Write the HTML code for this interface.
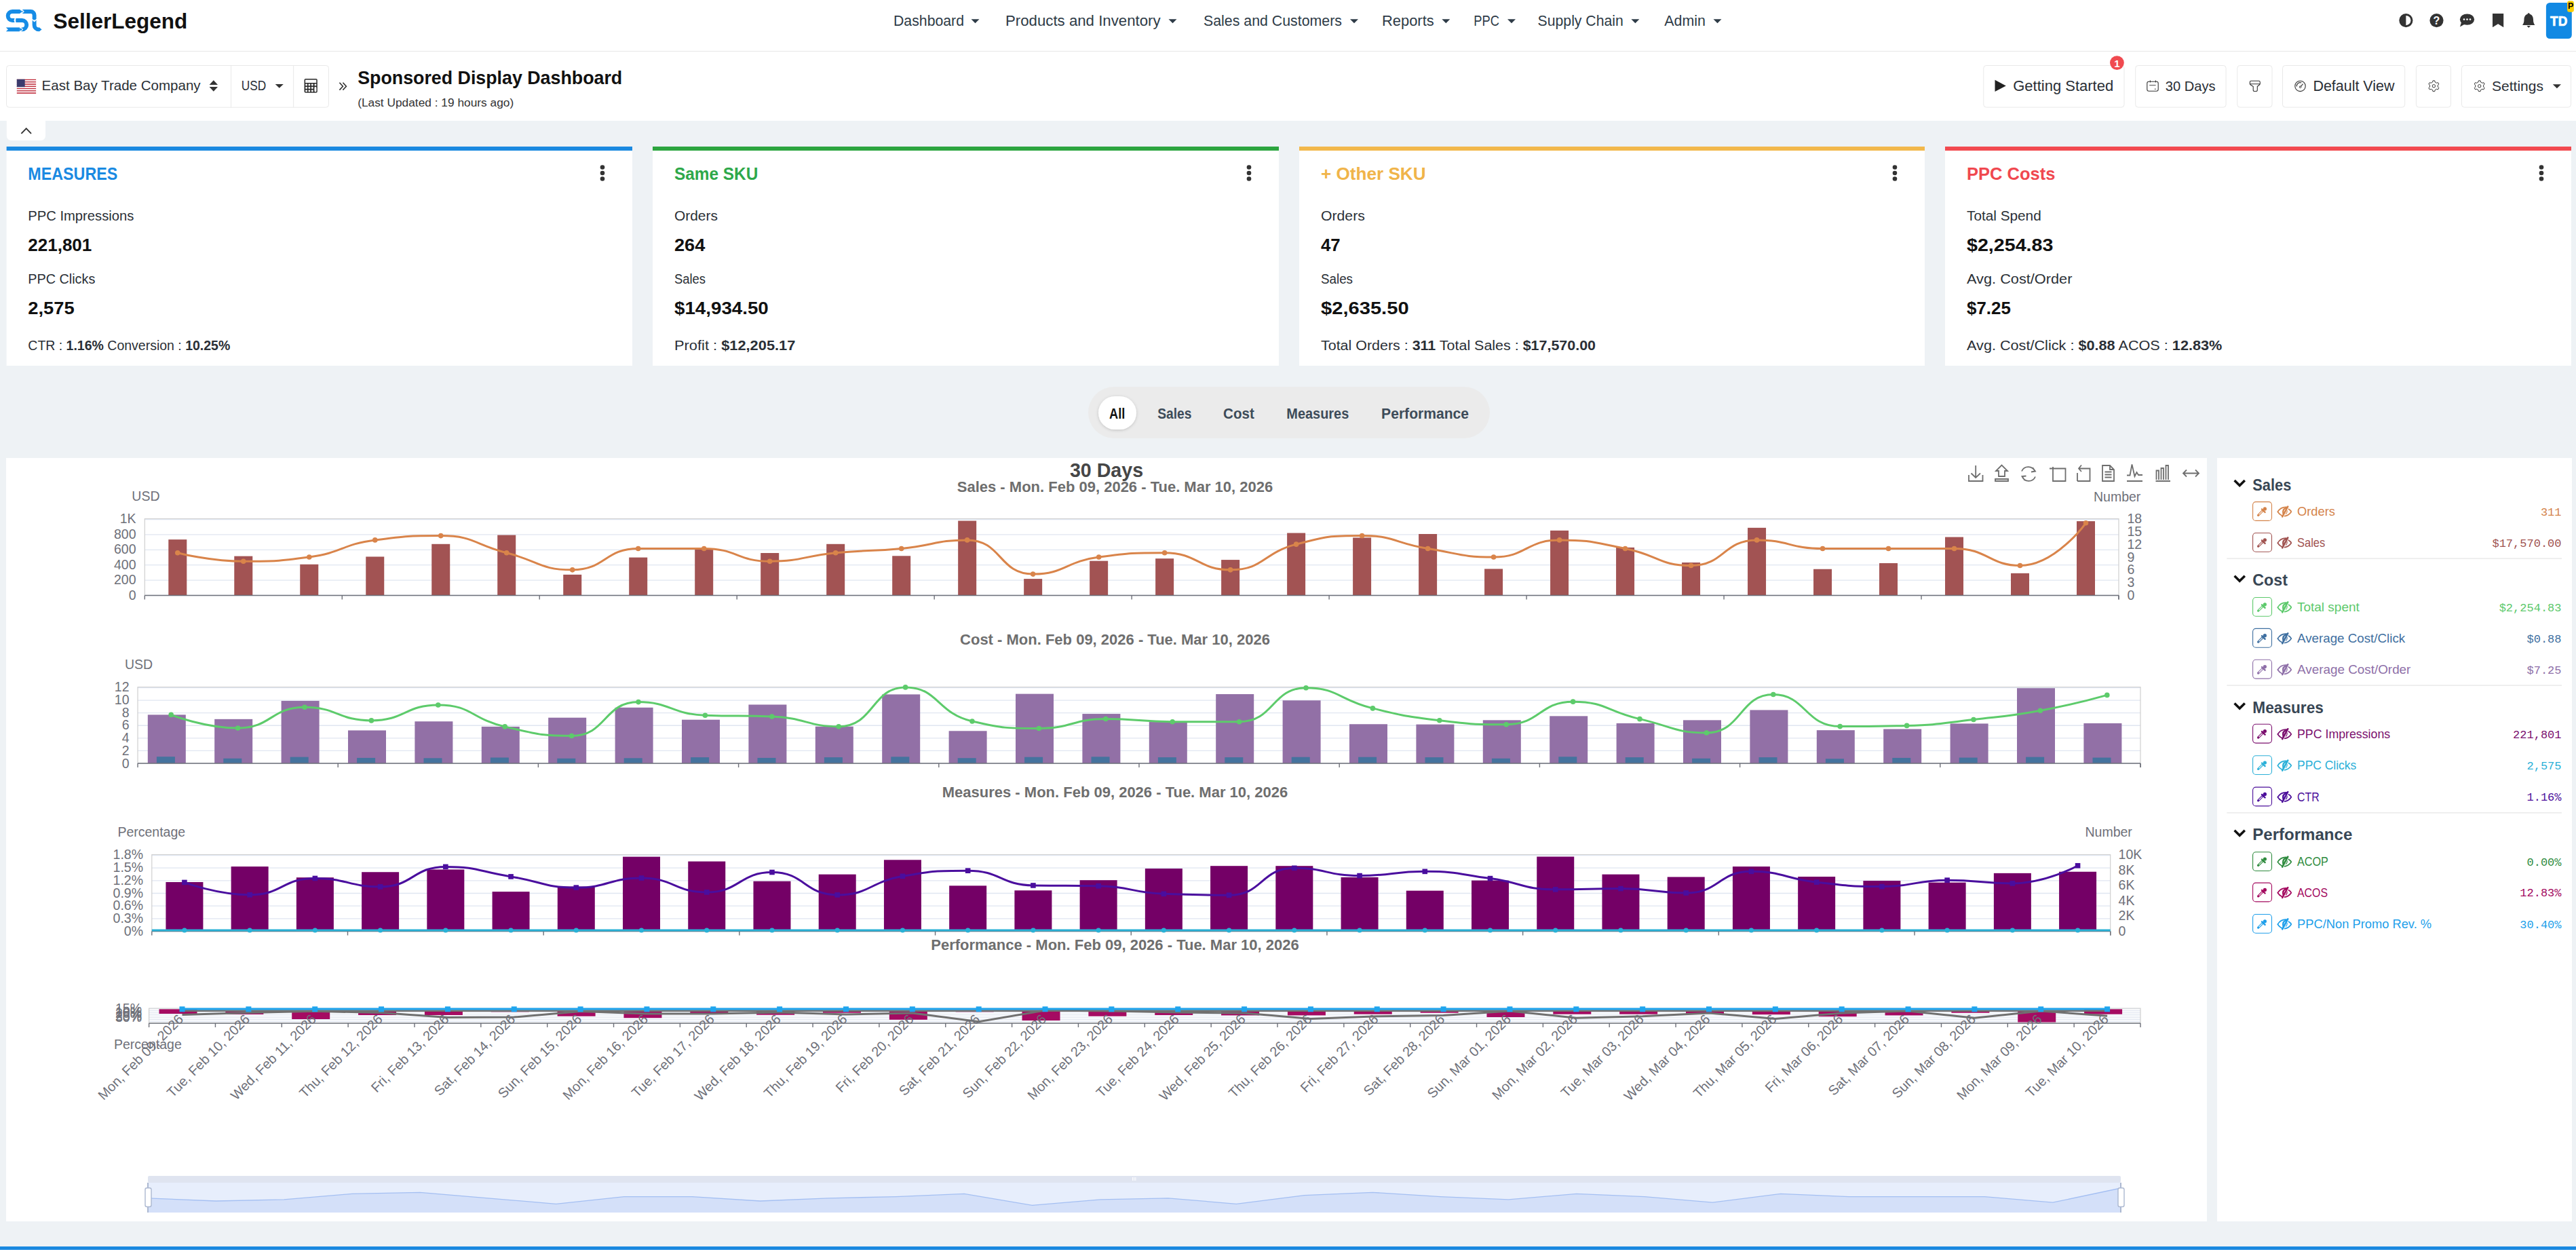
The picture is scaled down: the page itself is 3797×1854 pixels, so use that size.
<!DOCTYPE html>
<html><head><meta charset="utf-8"><title>Sponsored Display Dashboard</title>
<style>html,body{margin:0;padding:0;width:3797px;height:1854px;overflow:hidden;background:#eef2f5;font-family:"Liberation Sans",sans-serif}</style>
</head><body>
<svg width="3797" height="1854" viewBox="0 0 3797 1854" style="display:block"><rect x="0.00" y="0.00" width="3797.00" height="1854.00" fill="#eef2f5" />
<rect x="0.00" y="0.00" width="3797.00" height="76.00" fill="#ffffff" />
<line x1="0.00" y1="75.50" x2="3797.00" y2="75.50" stroke="#e6e6e6" stroke-width="1" />
<rect x="0.00" y="76.00" width="3797.00" height="102.00" fill="#ffffff" />
<g fill="none" stroke="#168ce6" stroke-width="5.9" stroke-linecap="butt">
<path d="M29.2,17 H18.2 A6.5,6.5 0 0 0 18.2,30 H21.2"/>
<path d="M32.8,17 H45.4 A5.2,5.2 0 0 1 50.6,22.2 V28"/>
<path d="M23.2,30 H32.5 A6.7,6.7 0 0 1 32.5,43.4 H30.8"/>
<path d="M9.1,43.4 H28.8"/>
<path d="M50.6,29.8 V37 A6.4,6.4 0 0 0 57,43.4 H58.2"/>
</g>
<g fill="#168ce6">
<path d="M29,14.05 L33,17 L29,19.95 Z"/>
<path d="M28.6,40.45 L31.6,43.4 L28.6,46.35 Z"/>
<path d="M58,40.45 L61.6,43.4 L58,46.35 Z"/>
<path d="M21.4,27.05 L19.4,30 L21.4,32.95 Z"/>
<path d="M47.65,27.8 L53.55,27.8 L50.6,30.8 Z"/>
</g>
<g fill="#fff">
<path d="M8.5,40.3 L11.9,43.4 L8.5,46.5 Z"/>
<path d="M31.1,14 L34.1,17 L31.1,20 L32.9,20 L35.9,17 L32.9,14 Z"/>
<path d="M47.3,29.6 L50.6,32.5 L53.9,29.6 Z"/>
<path d="M29.9,40.3 L32.8,43.4 L29.9,46.5 L31.3,46.5 L34.2,43.4 L31.3,40.3 Z"/>
<path d="M22.3,27 L20.3,30 L22.3,33 L23.6,33 L21.6,30 L23.6,27 Z"/>
</g>
<text x="78.5" y="42.2" font-family="Liberation Sans" font-size="31.5" font-weight="bold" fill="#111" text-anchor="start" >SellerLegend</text>
<text x="1317.0" y="38.2" font-family="Liberation Sans" font-size="21.3" font-weight="normal" fill="#2e3b47" text-anchor="start" textLength="104" lengthAdjust="spacingAndGlyphs">Dashboard</text>
<path d="M1431.5,28.2 h12 l-6.0,6 z" fill="#2e3b47"/>
<text x="1482.0" y="38.2" font-family="Liberation Sans" font-size="21.3" font-weight="normal" fill="#2e3b47" text-anchor="start" textLength="228.6" lengthAdjust="spacingAndGlyphs">Products and Inventory</text>
<path d="M1722.5,28.2 h12 l-6.0,6 z" fill="#2e3b47"/>
<text x="1774.0" y="38.2" font-family="Liberation Sans" font-size="21.3" font-weight="normal" fill="#2e3b47" text-anchor="start" textLength="204" lengthAdjust="spacingAndGlyphs">Sales and Customers</text>
<path d="M1990.0,28.2 h12 l-6.0,6 z" fill="#2e3b47"/>
<text x="2037.0" y="38.2" font-family="Liberation Sans" font-size="21.3" font-weight="normal" fill="#2e3b47" text-anchor="start" textLength="76.7" lengthAdjust="spacingAndGlyphs">Reports</text>
<path d="M2125.3,28.2 h12 l-6.0,6 z" fill="#2e3b47"/>
<text x="2172.3" y="38.2" font-family="Liberation Sans" font-size="21.3" font-weight="normal" fill="#2e3b47" text-anchor="start" textLength="37.7" lengthAdjust="spacingAndGlyphs">PPC</text>
<path d="M2222.0,28.2 h12 l-6.0,6 z" fill="#2e3b47"/>
<text x="2266.6" y="38.2" font-family="Liberation Sans" font-size="21.3" font-weight="normal" fill="#2e3b47" text-anchor="start" textLength="126.2" lengthAdjust="spacingAndGlyphs">Supply Chain</text>
<path d="M2404.4,28.2 h12 l-6.0,6 z" fill="#2e3b47"/>
<text x="2453.3" y="38.2" font-family="Liberation Sans" font-size="21.3" font-weight="normal" fill="#2e3b47" text-anchor="start" textLength="60.6" lengthAdjust="spacingAndGlyphs">Admin</text>
<path d="M2525.5,28.2 h12 l-6.0,6 z" fill="#2e3b47"/>
<circle cx="3546.4" cy="30.1" r="8.6" fill="none" stroke="#333" stroke-width="3"/>
<path d="M3546.4,21.5 A8.6,8.6 0 0 0 3546.4,38.7 Z" fill="#333"/>
<circle cx="3591.5" cy="30.1" r="10.1" fill="#333"/>
<text x="3591.5" y="36.3" font-family="Liberation Sans" font-size="16" font-weight="bold" fill="#fff" text-anchor="middle" >?</text>
<ellipse cx="3636.5" cy="28.6" rx="10.6" ry="8.2" fill="#333"/>
<path d="M3628,33 L3626,39.5 L3634,35 Z" fill="#333"/>
<circle cx="3632.0" cy="28.6" r="1.3" fill="#fff"/>
<circle cx="3636.5" cy="28.6" r="1.3" fill="#fff"/>
<circle cx="3641.0" cy="28.6" r="1.3" fill="#fff"/>
<path d="M3674,20 H3690.2 V40.2 L3682.1,35.2 L3674,40.2 Z" fill="#333"/>
<path d="M3727.2,20.5 C3722,21 3720.5,25 3720.5,29 C3720.5,33 3719.5,35 3718,37 H3736.4 C3735,35 3734,33 3734,29 C3734,25 3732.4,21 3727.2,20.5 Z" fill="#333"/>
<circle cx="3727.2" cy="20.6" r="1.4" fill="#333"/>
<path d="M3724.5,38 H3730 L3727.2,41 Z" fill="#333"/>
<rect x="3752.9" y="4" width="37.9" height="53" rx="5.5" fill="#1289e3"/>
<text x="3759.1" y="37.6" font-family="Liberation Sans" font-size="20" font-weight="bold" fill="#fff" text-anchor="start" textLength="25.2" lengthAdjust="spacingAndGlyphs" stroke="#fff" stroke-width="0.7">TD</text>
<rect x="3784.1" y="1.2" width="9.8" height="16.5" rx="3" fill="#fcd000"/>
<text x="3789.1" y="12.9" font-family="Liberation Sans" font-size="12.5" font-weight="bold" fill="#000" text-anchor="middle" >P</text>
<rect x="9.5" y="96.5" width="475" height="61.7" rx="4" fill="#fff" stroke="#e9e9e9" stroke-width="1"/>
<line x1="340.50" y1="96.50" x2="340.50" y2="158.20" stroke="#e9e9e9" stroke-width="1" />
<line x1="432.60" y1="96.50" x2="432.60" y2="158.20" stroke="#e9e9e9" stroke-width="1" />
<rect x="24.80" y="116.80" width="28.30" height="1.63" fill="#c0303f" />
<rect x="24.80" y="118.43" width="28.30" height="1.63" fill="#ffffff" />
<rect x="24.80" y="120.06" width="28.30" height="1.63" fill="#c0303f" />
<rect x="24.80" y="121.69" width="28.30" height="1.63" fill="#ffffff" />
<rect x="24.80" y="123.32" width="28.30" height="1.63" fill="#c0303f" />
<rect x="24.80" y="124.95" width="28.30" height="1.63" fill="#ffffff" />
<rect x="24.80" y="126.58" width="28.30" height="1.63" fill="#c0303f" />
<rect x="24.80" y="128.22" width="28.30" height="1.63" fill="#ffffff" />
<rect x="24.80" y="129.85" width="28.30" height="1.63" fill="#c0303f" />
<rect x="24.80" y="131.48" width="28.30" height="1.63" fill="#ffffff" />
<rect x="24.80" y="133.11" width="28.30" height="1.63" fill="#c0303f" />
<rect x="24.80" y="134.74" width="28.30" height="1.63" fill="#ffffff" />
<rect x="24.80" y="136.37" width="28.30" height="1.63" fill="#c0303f" />
<rect x="24.80" y="116.80" width="11.89" height="11.42" fill="#3b3b6d" />
<text x="61.6" y="133.4" font-family="Liberation Sans" font-size="20.6" font-weight="normal" fill="#2a2f36" text-anchor="start" textLength="234" lengthAdjust="spacingAndGlyphs">East Bay Trade Company</text>
<path d="M308.6,125 L314.8,118.3 L321,125 Z M308.6,128 L314.8,134.8 L321,128 Z" fill="#333"/>
<text x="355.7" y="133.4" font-family="Liberation Sans" font-size="20" font-weight="normal" fill="#2a2f36" text-anchor="start" textLength="36.5" lengthAdjust="spacingAndGlyphs">USD</text>
<path d="M405.7,124.0 h12.1 l-6.05,5.8 z" fill="#333"/>
<rect x="448.5" y="116.1" width="19.3" height="20.7" rx="2" fill="#333"/>
<rect x="450.1" y="117.6" width="16.1" height="4.4" fill="#fff"/>
<circle cx="451.6" cy="125" r="1.45" fill="#fff"/>
<circle cx="451.6" cy="129.5" r="1.45" fill="#fff"/>
<circle cx="451.6" cy="134" r="1.45" fill="#fff"/>
<circle cx="455.9" cy="125" r="1.45" fill="#fff"/>
<circle cx="455.9" cy="129.5" r="1.45" fill="#fff"/>
<circle cx="455.9" cy="134" r="1.45" fill="#fff"/>
<circle cx="460.3" cy="125" r="1.45" fill="#fff"/>
<circle cx="460.3" cy="129.5" r="1.45" fill="#fff"/>
<circle cx="460.3" cy="134" r="1.45" fill="#fff"/>
<circle cx="464.9" cy="125" r="1.45" fill="#fff"/>
<rect x="463.45" y="128" width="2.9" height="7.5" rx="1.45" fill="#fff"/>
<path d="M500.4,121.8 L505.4,127.2 L500.4,132.6 M505.4,121.8 L510.4,127.2 L505.4,132.6" fill="none" stroke="#333" stroke-width="1.6"/>
<text x="527.2" y="124.2" font-family="Liberation Sans" font-size="26.8" font-weight="bold" fill="#111" text-anchor="start" textLength="390" lengthAdjust="spacingAndGlyphs">Sponsored Display Dashboard</text>
<text x="527.2" y="156.8" font-family="Liberation Sans" font-size="17.3" font-weight="normal" fill="#333" text-anchor="start" textLength="230" lengthAdjust="spacingAndGlyphs">(Last Updated : 19 hours ago)</text>
<rect x="2923.8" y="96.5" width="207.2" height="61.6" rx="4" fill="#fff" stroke="#e9e9e9" stroke-width="1"/>
<path d="M2940.5,117.7 L2956.8,126.4 L2940.5,135 Z" fill="#222"/>
<text x="2967.2" y="134.4" font-family="Liberation Sans" font-size="22" font-weight="normal" fill="#2a2f36" text-anchor="start" textLength="148" lengthAdjust="spacingAndGlyphs">Getting Started</text>
<circle cx="3120.4" cy="92.6" r="10.4" fill="#f04a50"/>
<text x="3120.4" y="98.8" font-family="Liberation Sans" font-size="15" font-weight="bold" fill="#fff" text-anchor="middle" >1</text>
<rect x="3147.7" y="96.5" width="133.4" height="61.6" rx="4" fill="#fff" stroke="#e9e9e9" stroke-width="1"/>
<rect x="3164.8" y="120.3" width="16.4" height="14" rx="2.5" fill="none" stroke="#333" stroke-width="1.1"/>
<line x1="3169.40" y1="118.60" x2="3169.40" y2="121.50" stroke="#333" stroke-width="1.1" />
<line x1="3177.40" y1="118.60" x2="3177.40" y2="121.50" stroke="#333" stroke-width="1.1" />
<line x1="3168.20" y1="125.60" x2="3177.60" y2="125.60" stroke="#777" stroke-width="1.4" />
<rect x="3176.00" y="130.60" width="1.40" height="1.30" fill="#333" />
<text x="3191.8" y="134.4" font-family="Liberation Sans" font-size="21" font-weight="normal" fill="#2a2f36" text-anchor="start" textLength="73.8" lengthAdjust="spacingAndGlyphs">30 Days</text>
<rect x="3297.8" y="96.5" width="51.2" height="61.6" rx="4" fill="#fff" stroke="#e9e9e9" stroke-width="1"/>
<path d="M3316.3,121.2 Q3316.3,119.3 3318.2,119.3 H3329.4 Q3331.3,119.3 3331.3,121.2 V123.2 Q3331.3,124.2 3330.3,125 L3327.3,127.5 V132.4 Q3327.3,134.5 3325.2,134.5 H3323.3 Q3321.2,134.5 3321.2,132.4 V127.5 L3317.3,125 Q3316.3,124.2 3316.3,123.2 Z M3316.3,123.8 H3331.3" fill="none" stroke="#333" stroke-width="1.1" stroke-linejoin="round"/>
<rect x="3364.5" y="96.5" width="180.2" height="61.6" rx="4" fill="#fff" stroke="#e9e9e9" stroke-width="1"/>
<circle cx="3390.5" cy="126.9" r="7.7" fill="none" stroke="#333" stroke-width="1.1"/>
<path d="M3385.3,127.5 A5.3,5.3 0 0 1 3392.3,121.9" fill="none" stroke="#333" stroke-width="1.1"/>
<path d="M3391.2,127.6 L3394.6,123.6" stroke="#333" stroke-width="1.1"/>
<circle cx="3390.6" cy="128.2" r="1.3" fill="none" stroke="#333" stroke-width="1"/>
<text x="3409.4" y="134.4" font-family="Liberation Sans" font-size="21.5" font-weight="normal" fill="#2a2f36" text-anchor="start" textLength="120.1" lengthAdjust="spacingAndGlyphs">Default View</text>
<rect x="3561.4" y="96.5" width="51.1" height="61.6" rx="4" fill="#fff" stroke="#e9e9e9" stroke-width="1"/>
<polygon points="3585.60,120.99 3586.05,118.92 3588.75,118.92 3589.20,120.99 3591.53,122.34 3593.55,121.69 3594.91,124.03 3593.33,125.45 3593.33,128.15 3594.91,129.57 3593.55,131.91 3591.53,131.26 3589.20,132.61 3588.75,134.68 3586.05,134.68 3585.60,132.61 3583.27,131.26 3581.25,131.91 3579.89,129.57 3581.47,128.15 3581.47,125.45 3579.89,124.03 3581.25,121.69 3583.27,122.34" fill="none" stroke="#333" stroke-width="1.0" stroke-linejoin="round"/>
<circle cx="3587.4" cy="126.8" r="2.2" fill="none" stroke="#333" stroke-width="1.0"/>
<rect x="3628.5" y="96.5" width="161.0" height="61.6" rx="4" fill="#fff" stroke="#e9e9e9" stroke-width="1"/>
<polygon points="3652.90,120.99 3653.35,118.92 3656.05,118.92 3656.50,120.99 3658.83,122.34 3660.85,121.69 3662.21,124.03 3660.63,125.45 3660.63,128.15 3662.21,129.57 3660.85,131.91 3658.83,131.26 3656.50,132.61 3656.05,134.68 3653.35,134.68 3652.90,132.61 3650.57,131.26 3648.55,131.91 3647.19,129.57 3648.77,128.15 3648.77,125.45 3647.19,124.03 3648.55,121.69 3650.57,122.34" fill="none" stroke="#333" stroke-width="1.0" stroke-linejoin="round"/>
<circle cx="3654.7" cy="126.8" r="2.2" fill="none" stroke="#333" stroke-width="1.0"/>
<text x="3673.0" y="134.4" font-family="Liberation Sans" font-size="21" font-weight="normal" fill="#2a2f36" text-anchor="start" textLength="76" lengthAdjust="spacingAndGlyphs">Settings</text>
<path d="M3762.8,124.2 h12.2 l-6.1,6 z" fill="#333"/>
<path d="M9.8,177 H67 V200.5 A6.5,6.5 0 0 1 60.5,207 H16.3 A6.5,6.5 0 0 1 9.8,200.5 Z" fill="#fff"/>
<path d="M31.4,196.8 L38.7,189.4 L46,196.8" fill="none" stroke="#333" stroke-width="1.9"/>
<rect x="9.60" y="216.00" width="922.40" height="323.00" fill="#fff" />
<rect x="9.60" y="216.00" width="922.40" height="6.00" fill="#1a89e0" />
<text x="41.3" y="265.0" font-family="Liberation Sans" font-size="26" font-weight="bold" fill="#1a8ae2" text-anchor="start" textLength="132" lengthAdjust="spacingAndGlyphs">MEASURES</text>
<circle cx="888" cy="246.5" r="3.3" fill="#333"/>
<circle cx="888" cy="255" r="3.3" fill="#333"/>
<circle cx="888" cy="263.5" r="3.3" fill="#333"/>
<text x="41.3" y="325.0" font-family="Liberation Sans" font-size="20.5" font-weight="normal" fill="#2a2f36" text-anchor="start" textLength="156" lengthAdjust="spacingAndGlyphs">PPC Impressions</text>
<text x="41.3" y="369.5" font-family="Liberation Sans" font-size="26" font-weight="bold" fill="#111" text-anchor="start" textLength="94" lengthAdjust="spacingAndGlyphs">221,801</text>
<text x="41.3" y="418.0" font-family="Liberation Sans" font-size="20.5" font-weight="normal" fill="#2a2f36" text-anchor="start" textLength="99" lengthAdjust="spacingAndGlyphs">PPC Clicks</text>
<text x="41.3" y="463.0" font-family="Liberation Sans" font-size="26" font-weight="bold" fill="#111" text-anchor="start" textLength="68.4" lengthAdjust="spacingAndGlyphs">2,575</text>
<text x="41.3" y="515.5" font-family="Liberation Sans" font-size="20.5" fill="#2a2f36" xml:space="preserve" textLength="298" lengthAdjust="spacingAndGlyphs"><tspan font-weight="normal">CTR : </tspan><tspan font-weight="bold">1.16%</tspan><tspan font-weight="normal"> Conversion : </tspan><tspan font-weight="bold">10.25%</tspan></text>
<rect x="962.00" y="216.00" width="923.00" height="323.00" fill="#fff" />
<rect x="962.00" y="216.00" width="923.00" height="6.00" fill="#2ca53f" />
<text x="994.0" y="265.0" font-family="Liberation Sans" font-size="26" font-weight="bold" fill="#2ea84a" text-anchor="start" textLength="123.3" lengthAdjust="spacingAndGlyphs">Same SKU</text>
<circle cx="1841" cy="246.5" r="3.3" fill="#333"/>
<circle cx="1841" cy="255" r="3.3" fill="#333"/>
<circle cx="1841" cy="263.5" r="3.3" fill="#333"/>
<text x="994.0" y="325.0" font-family="Liberation Sans" font-size="20.5" font-weight="normal" fill="#2a2f36" text-anchor="start" textLength="63.9" lengthAdjust="spacingAndGlyphs">Orders</text>
<text x="994.0" y="369.5" font-family="Liberation Sans" font-size="26" font-weight="bold" fill="#111" text-anchor="start" textLength="45.3" lengthAdjust="spacingAndGlyphs">264</text>
<text x="994.0" y="418.0" font-family="Liberation Sans" font-size="20.5" font-weight="normal" fill="#2a2f36" text-anchor="start" textLength="46" lengthAdjust="spacingAndGlyphs">Sales</text>
<text x="994.0" y="463.0" font-family="Liberation Sans" font-size="26" font-weight="bold" fill="#111" text-anchor="start" textLength="138.8" lengthAdjust="spacingAndGlyphs">$14,934.50</text>
<text x="994" y="515.5" font-family="Liberation Sans" font-size="20.5" fill="#2a2f36" xml:space="preserve" textLength="178.4" lengthAdjust="spacingAndGlyphs"><tspan font-weight="normal">Profit : </tspan><tspan font-weight="bold">$12,205.17</tspan></text>
<rect x="1915.00" y="216.00" width="922.00" height="323.00" fill="#fff" />
<rect x="1915.00" y="216.00" width="922.00" height="6.00" fill="#f2b84b" />
<text x="1947.0" y="265.0" font-family="Liberation Sans" font-size="26" font-weight="bold" fill="#f0b44a" text-anchor="start" textLength="154.6" lengthAdjust="spacingAndGlyphs">+ Other SKU</text>
<circle cx="2793" cy="246.5" r="3.3" fill="#333"/>
<circle cx="2793" cy="255" r="3.3" fill="#333"/>
<circle cx="2793" cy="263.5" r="3.3" fill="#333"/>
<text x="1947.0" y="325.0" font-family="Liberation Sans" font-size="20.5" font-weight="normal" fill="#2a2f36" text-anchor="start" textLength="64.8" lengthAdjust="spacingAndGlyphs">Orders</text>
<text x="1947.0" y="369.5" font-family="Liberation Sans" font-size="26" font-weight="bold" fill="#111" text-anchor="start" textLength="28.7" lengthAdjust="spacingAndGlyphs">47</text>
<text x="1947.0" y="418.0" font-family="Liberation Sans" font-size="20.5" font-weight="normal" fill="#2a2f36" text-anchor="start" textLength="47" lengthAdjust="spacingAndGlyphs">Sales</text>
<text x="1947.0" y="463.0" font-family="Liberation Sans" font-size="26" font-weight="bold" fill="#111" text-anchor="start" textLength="129.6" lengthAdjust="spacingAndGlyphs">$2,635.50</text>
<text x="1947" y="515.5" font-family="Liberation Sans" font-size="20.5" fill="#2a2f36" xml:space="preserve" textLength="405" lengthAdjust="spacingAndGlyphs"><tspan font-weight="normal">Total Orders : </tspan><tspan font-weight="bold">311</tspan><tspan font-weight="normal"> Total Sales : </tspan><tspan font-weight="bold">$17,570.00</tspan></text>
<rect x="2867.00" y="216.00" width="923.00" height="323.00" fill="#fff" />
<rect x="2867.00" y="216.00" width="923.00" height="6.00" fill="#f24a50" />
<text x="2899.0" y="265.0" font-family="Liberation Sans" font-size="26" font-weight="bold" fill="#f0484f" text-anchor="start" textLength="130.4" lengthAdjust="spacingAndGlyphs">PPC Costs</text>
<circle cx="3746" cy="246.5" r="3.3" fill="#333"/>
<circle cx="3746" cy="255" r="3.3" fill="#333"/>
<circle cx="3746" cy="263.5" r="3.3" fill="#333"/>
<text x="2899.0" y="325.0" font-family="Liberation Sans" font-size="20.5" font-weight="normal" fill="#2a2f36" text-anchor="start" textLength="109.7" lengthAdjust="spacingAndGlyphs">Total Spend</text>
<text x="2899.0" y="369.5" font-family="Liberation Sans" font-size="26" font-weight="bold" fill="#111" text-anchor="start" textLength="127.4" lengthAdjust="spacingAndGlyphs">$2,254.83</text>
<text x="2899.0" y="418.0" font-family="Liberation Sans" font-size="20.5" font-weight="normal" fill="#2a2f36" text-anchor="start" textLength="155.4" lengthAdjust="spacingAndGlyphs">Avg. Cost/Order</text>
<text x="2899.0" y="463.0" font-family="Liberation Sans" font-size="26" font-weight="bold" fill="#111" text-anchor="start" textLength="64.8" lengthAdjust="spacingAndGlyphs">$7.25</text>
<text x="2899" y="515.5" font-family="Liberation Sans" font-size="20.5" fill="#2a2f36" xml:space="preserve" textLength="376.3" lengthAdjust="spacingAndGlyphs"><tspan font-weight="normal">Avg. Cost/Click : </tspan><tspan font-weight="bold">$0.88</tspan><tspan font-weight="normal"> ACOS : </tspan><tspan font-weight="bold">12.83%</tspan></text>
<rect x="1604" y="570" width="592" height="76" rx="38" fill="#ebebeb"/>
<defs><filter id="sh" x="-30%" y="-30%" width="160%" height="160%"><feDropShadow dx="0" dy="1" stdDeviation="2" flood-color="#000" flood-opacity="0.18"/></filter></defs>
<rect x="1619" y="584" width="56" height="49" rx="24.5" fill="#fff" filter="url(#sh)"/>
<text x="1635.0" y="616.6" font-family="Liberation Sans" font-size="22.5" font-weight="bold" fill="#111" text-anchor="start" textLength="23.3" lengthAdjust="spacingAndGlyphs">All</text>
<text x="1706.2" y="616.6" font-family="Liberation Sans" font-size="22.5" font-weight="bold" fill="#3d4b59" text-anchor="start" textLength="50.2" lengthAdjust="spacingAndGlyphs">Sales</text>
<text x="1803.1" y="616.6" font-family="Liberation Sans" font-size="22.5" font-weight="bold" fill="#3d4b59" text-anchor="start" textLength="45.7" lengthAdjust="spacingAndGlyphs">Cost</text>
<text x="1896.3" y="616.6" font-family="Liberation Sans" font-size="22.5" font-weight="bold" fill="#3d4b59" text-anchor="start" textLength="92" lengthAdjust="spacingAndGlyphs">Measures</text>
<text x="2036.1" y="616.6" font-family="Liberation Sans" font-size="22.5" font-weight="bold" fill="#3d4b59" text-anchor="start" textLength="129" lengthAdjust="spacingAndGlyphs">Performance</text>
<rect x="9.00" y="675.00" width="3244.00" height="1125.00" fill="#fff" />
<rect x="3268.00" y="675.00" width="523.00" height="1125.00" fill="#fff" />
<rect x="0.00" y="1837.00" width="3797.00" height="5.00" fill="#1a89e0" />
<rect x="0.00" y="1842.00" width="3797.00" height="12.00" fill="#fff" />
<text x="1631.0" y="702.9" font-family="Liberation Sans" font-size="28.6" font-weight="bold" fill="#464646" text-anchor="middle" >30 Days</text>
<text x="1643.5" y="724.9" font-family="Liberation Sans" font-size="22" font-weight="bold" fill="#6e6e6e" text-anchor="middle" >Sales - Mon. Feb 09, 2026 - Tue. Mar 10, 2026</text>
<text x="194.3" y="738.0" font-family="Liberation Sans" font-size="19.5" font-weight="normal" fill="#6e7079" text-anchor="start" >USD</text>
<text x="3086.0" y="738.5" font-family="Liberation Sans" font-size="19.5" font-weight="normal" fill="#6e7079" text-anchor="start" >Number</text>
<line x1="213.30" y1="765.50" x2="3123.00" y2="765.50" stroke="#e0e6f1" stroke-width="1.3" />
<line x1="213.30" y1="787.90" x2="3123.00" y2="787.90" stroke="#e0e6f1" stroke-width="1.3" />
<line x1="213.30" y1="810.30" x2="3123.00" y2="810.30" stroke="#e0e6f1" stroke-width="1.3" />
<line x1="213.30" y1="832.70" x2="3123.00" y2="832.70" stroke="#e0e6f1" stroke-width="1.3" />
<line x1="213.30" y1="855.10" x2="3123.00" y2="855.10" stroke="#e0e6f1" stroke-width="1.3" />
<line x1="213.30" y1="877.50" x2="3123.00" y2="877.50" stroke="#e0e6f1" stroke-width="1.3" />
<path d="M213.30,877.50 V764.50 H3123.00 V877.50" fill="none" stroke="#cfcfcf" stroke-width="1.2"/>
<text x="200.5" y="771.0" font-family="Liberation Sans" font-size="19.5" font-weight="normal" fill="#6e7079" text-anchor="end" >1K</text>
<text x="200.5" y="793.6" font-family="Liberation Sans" font-size="19.5" font-weight="normal" fill="#6e7079" text-anchor="end" >800</text>
<text x="200.5" y="816.2" font-family="Liberation Sans" font-size="19.5" font-weight="normal" fill="#6e7079" text-anchor="end" >600</text>
<text x="200.5" y="838.8" font-family="Liberation Sans" font-size="19.5" font-weight="normal" fill="#6e7079" text-anchor="end" >400</text>
<text x="200.5" y="861.4" font-family="Liberation Sans" font-size="19.5" font-weight="normal" fill="#6e7079" text-anchor="end" >200</text>
<text x="200.5" y="884.0" font-family="Liberation Sans" font-size="19.5" font-weight="normal" fill="#6e7079" text-anchor="end" >0</text>
<text x="3135.4" y="771.0" font-family="Liberation Sans" font-size="19.5" font-weight="normal" fill="#6e7079" text-anchor="start" >18</text>
<text x="3135.4" y="789.8" font-family="Liberation Sans" font-size="19.5" font-weight="normal" fill="#6e7079" text-anchor="start" >15</text>
<text x="3135.4" y="808.7" font-family="Liberation Sans" font-size="19.5" font-weight="normal" fill="#6e7079" text-anchor="start" >12</text>
<text x="3135.4" y="827.5" font-family="Liberation Sans" font-size="19.5" font-weight="normal" fill="#6e7079" text-anchor="start" >9</text>
<text x="3135.4" y="846.3" font-family="Liberation Sans" font-size="19.5" font-weight="normal" fill="#6e7079" text-anchor="start" >6</text>
<text x="3135.4" y="865.2" font-family="Liberation Sans" font-size="19.5" font-weight="normal" fill="#6e7079" text-anchor="start" >3</text>
<text x="3135.4" y="884.0" font-family="Liberation Sans" font-size="19.5" font-weight="normal" fill="#6e7079" text-anchor="start" >0</text>
<rect x="248.30" y="795.12" width="27.00" height="82.38" fill="#a25353" />
<rect x="345.28" y="819.64" width="27.00" height="57.86" fill="#a25353" />
<rect x="442.27" y="831.74" width="27.00" height="45.77" fill="#a25353" />
<rect x="539.26" y="820.43" width="27.00" height="57.06" fill="#a25353" />
<rect x="636.25" y="801.79" width="27.00" height="75.71" fill="#a25353" />
<rect x="733.24" y="788.57" width="27.00" height="88.93" fill="#a25353" />
<rect x="830.23" y="846.88" width="27.00" height="30.62" fill="#a25353" />
<rect x="927.22" y="821.57" width="27.00" height="55.94" fill="#a25353" />
<rect x="1024.21" y="809.93" width="27.00" height="67.57" fill="#a25353" />
<rect x="1121.20" y="815.01" width="27.00" height="62.49" fill="#a25353" />
<rect x="1218.19" y="801.79" width="27.00" height="75.71" fill="#a25353" />
<rect x="1315.18" y="819.30" width="27.00" height="58.20" fill="#a25353" />
<rect x="1412.17" y="767.55" width="27.00" height="109.95" fill="#a25353" />
<rect x="1509.16" y="853.09" width="27.00" height="24.41" fill="#a25353" />
<rect x="1606.15" y="826.65" width="27.00" height="50.85" fill="#a25353" />
<rect x="1703.14" y="823.15" width="27.00" height="54.35" fill="#a25353" />
<rect x="1800.13" y="825.07" width="27.00" height="52.43" fill="#a25353" />
<rect x="1897.12" y="785.52" width="27.00" height="91.98" fill="#a25353" />
<rect x="1994.11" y="792.41" width="27.00" height="85.09" fill="#a25353" />
<rect x="2091.11" y="786.99" width="27.00" height="90.51" fill="#a25353" />
<rect x="2188.09" y="838.40" width="27.00" height="39.10" fill="#a25353" />
<rect x="2285.09" y="781.90" width="27.00" height="95.60" fill="#a25353" />
<rect x="2382.08" y="806.88" width="27.00" height="70.62" fill="#a25353" />
<rect x="2479.07" y="829.02" width="27.00" height="48.48" fill="#a25353" />
<rect x="2576.05" y="777.83" width="27.00" height="99.67" fill="#a25353" />
<rect x="2673.05" y="838.74" width="27.00" height="38.76" fill="#a25353" />
<rect x="2770.03" y="829.93" width="27.00" height="47.57" fill="#a25353" />
<rect x="2867.03" y="791.51" width="27.00" height="85.99" fill="#a25353" />
<rect x="2964.01" y="844.84" width="27.00" height="32.66" fill="#a25353" />
<rect x="3061.01" y="768.12" width="27.00" height="109.38" fill="#a25353" />
<line x1="213.30" y1="877.50" x2="3123.00" y2="877.50" stroke="#6e7079" stroke-width="1.6" />
<line x1="213.30" y1="877.50" x2="213.30" y2="883.50" stroke="#6e7079" stroke-width="1.4" />
<line x1="504.27" y1="877.50" x2="504.27" y2="883.50" stroke="#6e7079" stroke-width="1.4" />
<line x1="795.24" y1="877.50" x2="795.24" y2="883.50" stroke="#6e7079" stroke-width="1.4" />
<line x1="1086.21" y1="877.50" x2="1086.21" y2="883.50" stroke="#6e7079" stroke-width="1.4" />
<line x1="1377.18" y1="877.50" x2="1377.18" y2="883.50" stroke="#6e7079" stroke-width="1.4" />
<line x1="1668.15" y1="877.50" x2="1668.15" y2="883.50" stroke="#6e7079" stroke-width="1.4" />
<line x1="1959.12" y1="877.50" x2="1959.12" y2="883.50" stroke="#6e7079" stroke-width="1.4" />
<line x1="2250.09" y1="877.50" x2="2250.09" y2="883.50" stroke="#6e7079" stroke-width="1.4" />
<line x1="2541.06" y1="877.50" x2="2541.06" y2="883.50" stroke="#6e7079" stroke-width="1.4" />
<line x1="2832.03" y1="877.50" x2="2832.03" y2="883.50" stroke="#6e7079" stroke-width="1.4" />
<line x1="3123.00" y1="877.50" x2="3123.00" y2="883.50" stroke="#6e7079" stroke-width="1.4" />
<line x1="3123.00" y1="877.50" x2="3123.00" y2="883.50" stroke="#6e7079" stroke-width="1.4" />
<path d="M261.80,814.72 C261.80,814.72 310.14,827.28 358.78,827.28 C407.13,827.28 408.02,827.28 455.77,821.00 C505.01,814.53 503.53,802.36 552.76,795.89 C600.52,789.61 602.00,789.61 649.75,789.61 C698.99,789.61 698.25,802.17 746.74,814.72 C795.24,827.28 795.66,839.83 843.73,839.83 C892.65,839.83 891.02,808.44 940.72,808.44 C988.01,808.44 989.67,808.44 1037.71,808.44 C1086.66,808.44 1085.96,827.28 1134.70,827.28 C1182.95,827.28 1183.05,819.45 1231.69,814.72 C1280.04,810.03 1280.34,813.14 1328.68,808.44 C1377.33,803.72 1379.86,795.89 1425.67,795.89 C1476.85,795.89 1472.08,846.11 1522.66,846.11 C1569.07,846.11 1570.42,827.47 1619.65,821.00 C1667.41,814.72 1668.89,814.72 1716.64,814.72 C1765.88,814.72 1766.06,839.83 1813.63,839.83 C1863.05,839.83 1860.63,815.11 1910.62,802.17 C1957.62,790.00 1959.37,789.61 2007.61,789.61 C2056.36,789.61 2055.86,800.56 2104.61,808.44 C2152.85,816.25 2153.69,821.00 2201.59,821.00 C2250.68,821.00 2249.50,795.89 2298.59,795.89 C2346.49,795.89 2347.67,799.14 2395.58,808.44 C2444.66,817.97 2444.99,833.56 2492.57,833.56 C2541.98,833.56 2539.56,795.89 2589.55,795.89 C2636.55,795.89 2637.85,808.44 2686.55,808.44 C2734.84,808.44 2735.04,808.44 2783.53,808.44 C2832.03,808.44 2832.82,808.44 2880.53,808.44 C2929.81,808.44 2932.47,833.56 2977.51,833.56 C3029.46,833.56 3074.51,770.78 3074.51,770.78" fill="none" stroke="#d9844a" stroke-width="3"/>
<circle cx="261.80" cy="814.72" r="3.8" fill="#d9844a"/>
<circle cx="358.78" cy="827.28" r="3.8" fill="#d9844a"/>
<circle cx="455.77" cy="821.00" r="3.8" fill="#d9844a"/>
<circle cx="552.76" cy="795.89" r="3.8" fill="#d9844a"/>
<circle cx="649.75" cy="789.61" r="3.8" fill="#d9844a"/>
<circle cx="746.74" cy="814.72" r="3.8" fill="#d9844a"/>
<circle cx="843.73" cy="839.83" r="3.8" fill="#d9844a"/>
<circle cx="940.72" cy="808.44" r="3.8" fill="#d9844a"/>
<circle cx="1037.71" cy="808.44" r="3.8" fill="#d9844a"/>
<circle cx="1134.70" cy="827.28" r="3.8" fill="#d9844a"/>
<circle cx="1231.69" cy="814.72" r="3.8" fill="#d9844a"/>
<circle cx="1328.68" cy="808.44" r="3.8" fill="#d9844a"/>
<circle cx="1425.67" cy="795.89" r="3.8" fill="#d9844a"/>
<circle cx="1522.66" cy="846.11" r="3.8" fill="#d9844a"/>
<circle cx="1619.65" cy="821.00" r="3.8" fill="#d9844a"/>
<circle cx="1716.64" cy="814.72" r="3.8" fill="#d9844a"/>
<circle cx="1813.63" cy="839.83" r="3.8" fill="#d9844a"/>
<circle cx="1910.62" cy="802.17" r="3.8" fill="#d9844a"/>
<circle cx="2007.61" cy="789.61" r="3.8" fill="#d9844a"/>
<circle cx="2104.61" cy="808.44" r="3.8" fill="#d9844a"/>
<circle cx="2201.59" cy="821.00" r="3.8" fill="#d9844a"/>
<circle cx="2298.59" cy="795.89" r="3.8" fill="#d9844a"/>
<circle cx="2395.58" cy="808.44" r="3.8" fill="#d9844a"/>
<circle cx="2492.57" cy="833.56" r="3.8" fill="#d9844a"/>
<circle cx="2589.55" cy="795.89" r="3.8" fill="#d9844a"/>
<circle cx="2686.55" cy="808.44" r="3.8" fill="#d9844a"/>
<circle cx="2783.53" cy="808.44" r="3.8" fill="#d9844a"/>
<circle cx="2880.53" cy="808.44" r="3.8" fill="#d9844a"/>
<circle cx="2977.51" cy="833.56" r="3.8" fill="#d9844a"/>
<circle cx="3074.51" cy="770.78" r="3.8" fill="#d9844a"/>
<text x="1643.5" y="950.3" font-family="Liberation Sans" font-size="22" font-weight="bold" fill="#6e6e6e" text-anchor="middle" >Cost - Mon. Feb 09, 2026 - Tue. Mar 10, 2026</text>
<text x="184.0" y="986.2" font-family="Liberation Sans" font-size="19.5" font-weight="normal" fill="#6e7079" text-anchor="start" >USD</text>
<line x1="203.00" y1="1013.50" x2="3155.00" y2="1013.50" stroke="#e0e6f1" stroke-width="1.3" />
<line x1="203.00" y1="1032.08" x2="3155.00" y2="1032.08" stroke="#e0e6f1" stroke-width="1.3" />
<line x1="203.00" y1="1050.67" x2="3155.00" y2="1050.67" stroke="#e0e6f1" stroke-width="1.3" />
<line x1="203.00" y1="1069.25" x2="3155.00" y2="1069.25" stroke="#e0e6f1" stroke-width="1.3" />
<line x1="203.00" y1="1087.83" x2="3155.00" y2="1087.83" stroke="#e0e6f1" stroke-width="1.3" />
<line x1="203.00" y1="1106.42" x2="3155.00" y2="1106.42" stroke="#e0e6f1" stroke-width="1.3" />
<line x1="203.00" y1="1125.00" x2="3155.00" y2="1125.00" stroke="#e0e6f1" stroke-width="1.3" />
<path d="M203.00,1125.00 V1012.50 H3155.00 V1125.00" fill="none" stroke="#cfcfcf" stroke-width="1.2"/>
<text x="190.5" y="1019.0" font-family="Liberation Sans" font-size="19.5" font-weight="normal" fill="#6e7079" text-anchor="end" >12</text>
<text x="190.5" y="1037.8" font-family="Liberation Sans" font-size="19.5" font-weight="normal" fill="#6e7079" text-anchor="end" >10</text>
<text x="190.5" y="1056.5" font-family="Liberation Sans" font-size="19.5" font-weight="normal" fill="#6e7079" text-anchor="end" >8</text>
<text x="190.5" y="1075.2" font-family="Liberation Sans" font-size="19.5" font-weight="normal" fill="#6e7079" text-anchor="end" >6</text>
<text x="190.5" y="1094.0" font-family="Liberation Sans" font-size="19.5" font-weight="normal" fill="#6e7079" text-anchor="end" >4</text>
<text x="190.5" y="1112.8" font-family="Liberation Sans" font-size="19.5" font-weight="normal" fill="#6e7079" text-anchor="end" >2</text>
<text x="190.5" y="1131.5" font-family="Liberation Sans" font-size="19.5" font-weight="normal" fill="#6e7079" text-anchor="end" >0</text>
<rect x="217.80" y="1053.38" width="56.00" height="71.62" fill="#9270a6" />
<rect x="230.90" y="1115.16" width="27.00" height="9.84" fill="#45739e" />
<rect x="316.20" y="1059.84" width="56.00" height="65.16" fill="#9270a6" />
<rect x="329.30" y="1117.78" width="27.00" height="7.22" fill="#45739e" />
<rect x="414.60" y="1032.94" width="56.00" height="92.06" fill="#9270a6" />
<rect x="427.70" y="1115.62" width="27.00" height="9.38" fill="#45739e" />
<rect x="513.00" y="1076.44" width="56.00" height="48.56" fill="#9270a6" />
<rect x="526.10" y="1116.94" width="27.00" height="8.06" fill="#45739e" />
<rect x="611.40" y="1063.22" width="56.00" height="61.78" fill="#9270a6" />
<rect x="624.50" y="1117.31" width="27.00" height="7.69" fill="#45739e" />
<rect x="709.80" y="1070.91" width="56.00" height="54.09" fill="#9270a6" />
<rect x="722.90" y="1116.47" width="27.00" height="8.53" fill="#45739e" />
<rect x="808.20" y="1057.69" width="56.00" height="67.31" fill="#9270a6" />
<rect x="821.30" y="1117.78" width="27.00" height="7.22" fill="#45739e" />
<rect x="906.60" y="1042.78" width="56.00" height="82.22" fill="#9270a6" />
<rect x="919.70" y="1117.31" width="27.00" height="7.69" fill="#45739e" />
<rect x="1005.00" y="1060.69" width="56.00" height="64.31" fill="#9270a6" />
<rect x="1018.10" y="1116.09" width="27.00" height="8.91" fill="#45739e" />
<rect x="1103.40" y="1038.47" width="56.00" height="86.53" fill="#9270a6" />
<rect x="1116.50" y="1116.94" width="27.00" height="8.06" fill="#45739e" />
<rect x="1201.80" y="1070.72" width="56.00" height="54.28" fill="#9270a6" />
<rect x="1214.90" y="1116.09" width="27.00" height="8.91" fill="#45739e" />
<rect x="1300.20" y="1023.38" width="56.00" height="101.62" fill="#9270a6" />
<rect x="1313.30" y="1115.34" width="27.00" height="9.66" fill="#45739e" />
<rect x="1398.60" y="1077.28" width="56.00" height="47.72" fill="#9270a6" />
<rect x="1411.70" y="1117.22" width="27.00" height="7.78" fill="#45739e" />
<rect x="1497.00" y="1022.62" width="56.00" height="102.38" fill="#9270a6" />
<rect x="1510.10" y="1115.72" width="27.00" height="9.28" fill="#45739e" />
<rect x="1595.40" y="1052.06" width="56.00" height="72.94" fill="#9270a6" />
<rect x="1608.50" y="1115.34" width="27.00" height="9.66" fill="#45739e" />
<rect x="1693.80" y="1064.06" width="56.00" height="60.94" fill="#9270a6" />
<rect x="1706.90" y="1116.09" width="27.00" height="8.91" fill="#45739e" />
<rect x="1792.20" y="1023.00" width="56.00" height="102.00" fill="#9270a6" />
<rect x="1805.30" y="1116.09" width="27.00" height="8.91" fill="#45739e" />
<rect x="1890.60" y="1032.28" width="56.00" height="92.72" fill="#9270a6" />
<rect x="1903.70" y="1115.72" width="27.00" height="9.28" fill="#45739e" />
<rect x="1989.00" y="1067.25" width="56.00" height="57.75" fill="#9270a6" />
<rect x="2002.10" y="1115.72" width="27.00" height="9.28" fill="#45739e" />
<rect x="2087.40" y="1067.62" width="56.00" height="57.38" fill="#9270a6" />
<rect x="2100.50" y="1116.09" width="27.00" height="8.91" fill="#45739e" />
<rect x="2185.80" y="1061.34" width="56.00" height="63.66" fill="#9270a6" />
<rect x="2198.90" y="1117.78" width="27.00" height="7.22" fill="#45739e" />
<rect x="2284.20" y="1055.34" width="56.00" height="69.66" fill="#9270a6" />
<rect x="2297.30" y="1115.25" width="27.00" height="9.75" fill="#45739e" />
<rect x="2382.60" y="1065.94" width="56.00" height="59.06" fill="#9270a6" />
<rect x="2395.70" y="1116.09" width="27.00" height="8.91" fill="#45739e" />
<rect x="2481.00" y="1061.34" width="56.00" height="63.66" fill="#9270a6" />
<rect x="2494.10" y="1117.78" width="27.00" height="7.22" fill="#45739e" />
<rect x="2579.40" y="1046.44" width="56.00" height="78.56" fill="#9270a6" />
<rect x="2592.50" y="1116.09" width="27.00" height="8.91" fill="#45739e" />
<rect x="2677.80" y="1076.16" width="56.00" height="48.84" fill="#9270a6" />
<rect x="2690.90" y="1118.25" width="27.00" height="6.75" fill="#45739e" />
<rect x="2776.20" y="1074.47" width="56.00" height="50.53" fill="#9270a6" />
<rect x="2789.30" y="1116.94" width="27.00" height="8.06" fill="#45739e" />
<rect x="2874.60" y="1066.41" width="56.00" height="58.59" fill="#9270a6" />
<rect x="2887.70" y="1116.56" width="27.00" height="8.44" fill="#45739e" />
<rect x="2973.00" y="1014.19" width="56.00" height="110.81" fill="#9270a6" />
<rect x="2986.10" y="1115.62" width="27.00" height="9.38" fill="#45739e" />
<rect x="3071.40" y="1065.94" width="56.00" height="59.06" fill="#9270a6" />
<rect x="3084.50" y="1116.56" width="27.00" height="8.44" fill="#45739e" />
<line x1="203.00" y1="1125.00" x2="3155.00" y2="1125.00" stroke="#6e7079" stroke-width="1.6" />
<line x1="203.00" y1="1125.00" x2="203.00" y2="1131.00" stroke="#6e7079" stroke-width="1.4" />
<line x1="498.20" y1="1125.00" x2="498.20" y2="1131.00" stroke="#6e7079" stroke-width="1.4" />
<line x1="793.40" y1="1125.00" x2="793.40" y2="1131.00" stroke="#6e7079" stroke-width="1.4" />
<line x1="1088.60" y1="1125.00" x2="1088.60" y2="1131.00" stroke="#6e7079" stroke-width="1.4" />
<line x1="1383.80" y1="1125.00" x2="1383.80" y2="1131.00" stroke="#6e7079" stroke-width="1.4" />
<line x1="1679.00" y1="1125.00" x2="1679.00" y2="1131.00" stroke="#6e7079" stroke-width="1.4" />
<line x1="1974.20" y1="1125.00" x2="1974.20" y2="1131.00" stroke="#6e7079" stroke-width="1.4" />
<line x1="2269.40" y1="1125.00" x2="2269.40" y2="1131.00" stroke="#6e7079" stroke-width="1.4" />
<line x1="2564.60" y1="1125.00" x2="2564.60" y2="1131.00" stroke="#6e7079" stroke-width="1.4" />
<line x1="2859.80" y1="1125.00" x2="2859.80" y2="1131.00" stroke="#6e7079" stroke-width="1.4" />
<line x1="3155.00" y1="1125.00" x2="3155.00" y2="1131.00" stroke="#6e7079" stroke-width="1.4" />
<line x1="3155.00" y1="1125.00" x2="3155.00" y2="1131.00" stroke="#6e7079" stroke-width="1.4" />
<path d="M252.20,1053.38 C252.20,1053.38 302.06,1072.97 350.60,1072.97 C400.46,1072.97 399.14,1042.31 449.00,1042.31 C497.54,1042.31 498.37,1061.91 547.40,1061.91 C596.77,1061.91 597.18,1038.94 645.80,1038.94 C695.58,1038.94 694.00,1059.28 744.20,1070.91 C792.40,1082.06 795.98,1084.50 842.60,1084.50 C894.38,1084.50 889.47,1034.62 941.00,1034.62 C987.87,1034.62 989.73,1052.40 1039.40,1054.22 C1088.13,1056.00 1088.87,1054.22 1137.80,1056.00 C1187.27,1057.80 1190.37,1070.72 1236.20,1070.72 C1288.77,1070.72 1284.58,1012.88 1334.60,1012.88 C1382.98,1012.88 1381.11,1051.22 1433.00,1062.94 C1479.51,1073.44 1482.31,1073.44 1531.40,1073.44 C1580.71,1073.44 1580.38,1059.47 1629.80,1059.47 C1678.78,1059.47 1678.98,1063.69 1728.20,1063.69 C1777.38,1063.69 1780.22,1063.69 1826.60,1063.69 C1878.62,1063.69 1874.09,1013.72 1925.00,1013.72 C1972.49,1013.72 1973.49,1031.71 2023.40,1043.91 C2071.89,1055.76 2072.24,1055.82 2121.80,1061.81 C2170.64,1067.72 2172.31,1067.72 2220.20,1067.72 C2270.71,1067.72 2268.85,1034.16 2318.60,1034.16 C2367.25,1034.16 2367.52,1048.13 2417.00,1059.66 C2465.92,1071.05 2469.18,1080.00 2515.40,1080.00 C2567.58,1080.00 2563.64,1023.56 2613.80,1023.56 C2662.04,1023.56 2660.47,1070.62 2712.20,1070.62 C2758.87,1070.62 2761.50,1070.62 2810.60,1069.41 C2859.90,1068.18 2859.92,1066.02 2909.00,1060.50 C2958.32,1054.96 2958.63,1056.23 3007.40,1047.28 C3057.03,1038.18 3105.80,1024.41 3105.80,1024.41" fill="none" stroke="#5dcb6b" stroke-width="3"/>
<circle cx="252.20" cy="1053.38" r="3.8" fill="#5dcb6b"/>
<circle cx="350.60" cy="1072.97" r="3.8" fill="#5dcb6b"/>
<circle cx="449.00" cy="1042.31" r="3.8" fill="#5dcb6b"/>
<circle cx="547.40" cy="1061.91" r="3.8" fill="#5dcb6b"/>
<circle cx="645.80" cy="1038.94" r="3.8" fill="#5dcb6b"/>
<circle cx="744.20" cy="1070.91" r="3.8" fill="#5dcb6b"/>
<circle cx="842.60" cy="1084.50" r="3.8" fill="#5dcb6b"/>
<circle cx="941.00" cy="1034.62" r="3.8" fill="#5dcb6b"/>
<circle cx="1039.40" cy="1054.22" r="3.8" fill="#5dcb6b"/>
<circle cx="1137.80" cy="1056.00" r="3.8" fill="#5dcb6b"/>
<circle cx="1236.20" cy="1070.72" r="3.8" fill="#5dcb6b"/>
<circle cx="1334.60" cy="1012.88" r="3.8" fill="#5dcb6b"/>
<circle cx="1433.00" cy="1062.94" r="3.8" fill="#5dcb6b"/>
<circle cx="1531.40" cy="1073.44" r="3.8" fill="#5dcb6b"/>
<circle cx="1629.80" cy="1059.47" r="3.8" fill="#5dcb6b"/>
<circle cx="1728.20" cy="1063.69" r="3.8" fill="#5dcb6b"/>
<circle cx="1826.60" cy="1063.69" r="3.8" fill="#5dcb6b"/>
<circle cx="1925.00" cy="1013.72" r="3.8" fill="#5dcb6b"/>
<circle cx="2023.40" cy="1043.91" r="3.8" fill="#5dcb6b"/>
<circle cx="2121.80" cy="1061.81" r="3.8" fill="#5dcb6b"/>
<circle cx="2220.20" cy="1067.72" r="3.8" fill="#5dcb6b"/>
<circle cx="2318.60" cy="1034.16" r="3.8" fill="#5dcb6b"/>
<circle cx="2417.00" cy="1059.66" r="3.8" fill="#5dcb6b"/>
<circle cx="2515.40" cy="1080.00" r="3.8" fill="#5dcb6b"/>
<circle cx="2613.80" cy="1023.56" r="3.8" fill="#5dcb6b"/>
<circle cx="2712.20" cy="1070.62" r="3.8" fill="#5dcb6b"/>
<circle cx="2810.60" cy="1069.41" r="3.8" fill="#5dcb6b"/>
<circle cx="2909.00" cy="1060.50" r="3.8" fill="#5dcb6b"/>
<circle cx="3007.40" cy="1047.28" r="3.8" fill="#5dcb6b"/>
<circle cx="3105.80" cy="1024.41" r="3.8" fill="#5dcb6b"/>
<text x="1643.5" y="1175.2" font-family="Liberation Sans" font-size="22" font-weight="bold" fill="#6e6e6e" text-anchor="middle" >Measures - Mon. Feb 09, 2026 - Tue. Mar 10, 2026</text>
<text x="173.4" y="1233.3" font-family="Liberation Sans" font-size="19.5" font-weight="normal" fill="#6e7079" text-anchor="start" >Percentage</text>
<text x="3073.5" y="1233.3" font-family="Liberation Sans" font-size="19.5" font-weight="normal" fill="#6e7079" text-anchor="start" >Number</text>
<line x1="223.80" y1="1260.50" x2="3110.70" y2="1260.50" stroke="#e0e6f1" stroke-width="1.3" />
<line x1="223.80" y1="1279.17" x2="3110.70" y2="1279.17" stroke="#e0e6f1" stroke-width="1.3" />
<line x1="223.80" y1="1297.83" x2="3110.70" y2="1297.83" stroke="#e0e6f1" stroke-width="1.3" />
<line x1="223.80" y1="1316.50" x2="3110.70" y2="1316.50" stroke="#e0e6f1" stroke-width="1.3" />
<line x1="223.80" y1="1335.17" x2="3110.70" y2="1335.17" stroke="#e0e6f1" stroke-width="1.3" />
<line x1="223.80" y1="1353.83" x2="3110.70" y2="1353.83" stroke="#e0e6f1" stroke-width="1.3" />
<line x1="223.80" y1="1372.50" x2="3110.70" y2="1372.50" stroke="#e0e6f1" stroke-width="1.3" />
<path d="M223.80,1372.50 V1259.50 H3110.70 V1372.50" fill="none" stroke="#cfcfcf" stroke-width="1.2"/>
<text x="211.0" y="1266.0" font-family="Liberation Sans" font-size="19.5" font-weight="normal" fill="#6e7079" text-anchor="end" >1.8%</text>
<text x="211.0" y="1284.8" font-family="Liberation Sans" font-size="19.5" font-weight="normal" fill="#6e7079" text-anchor="end" >1.5%</text>
<text x="211.0" y="1303.7" font-family="Liberation Sans" font-size="19.5" font-weight="normal" fill="#6e7079" text-anchor="end" >1.2%</text>
<text x="211.0" y="1322.5" font-family="Liberation Sans" font-size="19.5" font-weight="normal" fill="#6e7079" text-anchor="end" >0.9%</text>
<text x="211.0" y="1341.3" font-family="Liberation Sans" font-size="19.5" font-weight="normal" fill="#6e7079" text-anchor="end" >0.6%</text>
<text x="211.0" y="1360.2" font-family="Liberation Sans" font-size="19.5" font-weight="normal" fill="#6e7079" text-anchor="end" >0.3%</text>
<text x="211.0" y="1379.0" font-family="Liberation Sans" font-size="19.5" font-weight="normal" fill="#6e7079" text-anchor="end" >0%</text>
<text x="3122.6" y="1266.0" font-family="Liberation Sans" font-size="19.5" font-weight="normal" fill="#6e7079" text-anchor="start" >10K</text>
<text x="3122.6" y="1288.6" font-family="Liberation Sans" font-size="19.5" font-weight="normal" fill="#6e7079" text-anchor="start" >8K</text>
<text x="3122.6" y="1311.2" font-family="Liberation Sans" font-size="19.5" font-weight="normal" fill="#6e7079" text-anchor="start" >6K</text>
<text x="3122.6" y="1333.8" font-family="Liberation Sans" font-size="19.5" font-weight="normal" fill="#6e7079" text-anchor="start" >4K</text>
<text x="3122.6" y="1356.4" font-family="Liberation Sans" font-size="19.5" font-weight="normal" fill="#6e7079" text-anchor="start" >2K</text>
<text x="3122.6" y="1379.0" font-family="Liberation Sans" font-size="19.5" font-weight="normal" fill="#6e7079" text-anchor="start" >0</text>
<rect x="244.42" y="1299.99" width="55.00" height="72.51" fill="#740066" />
<rect x="340.64" y="1277.08" width="55.00" height="95.42" fill="#740066" />
<rect x="436.88" y="1293.21" width="55.00" height="79.29" fill="#740066" />
<rect x="533.11" y="1285.24" width="55.00" height="87.26" fill="#740066" />
<rect x="629.34" y="1281.47" width="55.00" height="91.03" fill="#740066" />
<rect x="725.57" y="1314.12" width="55.00" height="58.38" fill="#740066" />
<rect x="821.79" y="1306.58" width="55.00" height="65.92" fill="#740066" />
<rect x="918.02" y="1262.64" width="55.00" height="109.86" fill="#740066" />
<rect x="1014.25" y="1269.54" width="55.00" height="102.96" fill="#740066" />
<rect x="1110.48" y="1298.74" width="55.00" height="73.76" fill="#740066" />
<rect x="1206.71" y="1288.63" width="55.00" height="83.87" fill="#740066" />
<rect x="1302.94" y="1267.28" width="55.00" height="105.22" fill="#740066" />
<rect x="1399.17" y="1305.33" width="55.00" height="67.17" fill="#740066" />
<rect x="1495.40" y="1312.30" width="55.00" height="60.20" fill="#740066" />
<rect x="1591.63" y="1297.17" width="55.00" height="75.33" fill="#740066" />
<rect x="1687.86" y="1280.09" width="55.00" height="92.41" fill="#740066" />
<rect x="1784.09" y="1276.20" width="55.00" height="96.30" fill="#740066" />
<rect x="1880.32" y="1276.20" width="55.00" height="96.30" fill="#740066" />
<rect x="1976.55" y="1292.90" width="55.00" height="79.60" fill="#740066" />
<rect x="2072.78" y="1312.67" width="55.00" height="59.83" fill="#740066" />
<rect x="2169.01" y="1297.61" width="55.00" height="74.89" fill="#740066" />
<rect x="2265.24" y="1262.51" width="55.00" height="109.99" fill="#740066" />
<rect x="2361.47" y="1288.63" width="55.00" height="83.87" fill="#740066" />
<rect x="2457.70" y="1292.46" width="55.00" height="80.04" fill="#740066" />
<rect x="2553.93" y="1277.08" width="55.00" height="95.42" fill="#740066" />
<rect x="2650.16" y="1292.02" width="55.00" height="80.48" fill="#740066" />
<rect x="2746.39" y="1298.05" width="55.00" height="74.45" fill="#740066" />
<rect x="2842.62" y="1300.62" width="55.00" height="71.88" fill="#740066" />
<rect x="2938.86" y="1286.87" width="55.00" height="85.63" fill="#740066" />
<rect x="3035.09" y="1284.74" width="55.00" height="87.76" fill="#740066" />
<line x1="223.80" y1="1372.50" x2="3110.70" y2="1372.50" stroke="#6e7079" stroke-width="1.6" />
<line x1="223.80" y1="1372.50" x2="223.80" y2="1378.50" stroke="#6e7079" stroke-width="1.4" />
<line x1="512.49" y1="1372.50" x2="512.49" y2="1378.50" stroke="#6e7079" stroke-width="1.4" />
<line x1="801.18" y1="1372.50" x2="801.18" y2="1378.50" stroke="#6e7079" stroke-width="1.4" />
<line x1="1089.87" y1="1372.50" x2="1089.87" y2="1378.50" stroke="#6e7079" stroke-width="1.4" />
<line x1="1378.56" y1="1372.50" x2="1378.56" y2="1378.50" stroke="#6e7079" stroke-width="1.4" />
<line x1="1667.25" y1="1372.50" x2="1667.25" y2="1378.50" stroke="#6e7079" stroke-width="1.4" />
<line x1="1955.94" y1="1372.50" x2="1955.94" y2="1378.50" stroke="#6e7079" stroke-width="1.4" />
<line x1="2244.63" y1="1372.50" x2="2244.63" y2="1378.50" stroke="#6e7079" stroke-width="1.4" />
<line x1="2533.32" y1="1372.50" x2="2533.32" y2="1378.50" stroke="#6e7079" stroke-width="1.4" />
<line x1="2822.01" y1="1372.50" x2="2822.01" y2="1378.50" stroke="#6e7079" stroke-width="1.4" />
<line x1="3110.70" y1="1372.50" x2="3110.70" y2="1378.50" stroke="#6e7079" stroke-width="1.4" />
<line x1="3110.70" y1="1372.50" x2="3110.70" y2="1378.50" stroke="#6e7079" stroke-width="1.4" />
<path d="M271.92,1300.44 C271.92,1300.44 320.35,1318.77 368.14,1318.77 C416.58,1318.77 415.71,1294.46 464.38,1294.46 C511.94,1294.46 513.37,1306.84 560.61,1306.84 C609.60,1306.84 607.91,1277.41 656.84,1277.41 C704.14,1277.41 705.02,1284.24 753.07,1291.91 C801.25,1299.59 801.10,1308.11 849.29,1308.11 C897.33,1308.11 897.71,1294.04 945.52,1294.04 C993.94,1294.04 994.16,1314.94 1041.75,1314.94 C1090.39,1314.94 1090.16,1285.51 1137.98,1285.51 C1186.39,1285.51 1185.68,1318.92 1234.21,1318.92 C1281.91,1318.92 1281.47,1299.80 1330.44,1291.34 C1377.70,1283.18 1379.07,1283.18 1426.67,1283.18 C1475.30,1283.18 1474.19,1304.15 1522.90,1304.94 C1570.42,1305.71 1571.19,1304.94 1619.13,1305.71 C1667.42,1306.48 1667.08,1315.40 1715.36,1317.36 C1763.31,1319.30 1765.39,1319.30 1811.59,1319.30 C1861.62,1319.30 1857.96,1279.31 1907.82,1279.31 C1954.19,1279.31 1955.83,1290.56 2004.05,1290.56 C2052.06,1290.56 2052.26,1284.36 2100.28,1284.36 C2148.49,1284.36 2148.60,1288.00 2196.51,1294.60 C2244.83,1301.25 2244.29,1310.86 2292.74,1310.86 C2340.52,1310.86 2340.91,1309.58 2388.97,1309.58 C2437.14,1309.58 2438.27,1316.00 2485.20,1316.00 C2534.50,1316.00 2532.40,1284.33 2581.43,1284.33 C2628.63,1284.33 2629.28,1294.56 2677.66,1300.16 C2725.51,1305.69 2725.84,1306.59 2773.89,1306.59 C2822.07,1306.59 2821.92,1297.16 2870.12,1297.16 C2918.15,1297.16 2919.07,1301.88 2966.36,1301.88 C3015.30,1301.88 3062.59,1275.76 3062.59,1275.76" fill="none" stroke="#4a0e9e" stroke-width="3"/>
<rect x="268.12" y="1296.64" width="7.60" height="7.60" fill="#4a0e9e" />
<rect x="364.34" y="1314.97" width="7.60" height="7.60" fill="#4a0e9e" />
<rect x="460.57" y="1290.66" width="7.60" height="7.60" fill="#4a0e9e" />
<rect x="556.81" y="1303.04" width="7.60" height="7.60" fill="#4a0e9e" />
<rect x="653.04" y="1273.61" width="7.60" height="7.60" fill="#4a0e9e" />
<rect x="749.27" y="1288.11" width="7.60" height="7.60" fill="#4a0e9e" />
<rect x="845.49" y="1304.31" width="7.60" height="7.60" fill="#4a0e9e" />
<rect x="941.72" y="1290.24" width="7.60" height="7.60" fill="#4a0e9e" />
<rect x="1037.95" y="1311.14" width="7.60" height="7.60" fill="#4a0e9e" />
<rect x="1134.18" y="1281.71" width="7.60" height="7.60" fill="#4a0e9e" />
<rect x="1230.41" y="1315.12" width="7.60" height="7.60" fill="#4a0e9e" />
<rect x="1326.64" y="1287.54" width="7.60" height="7.60" fill="#4a0e9e" />
<rect x="1422.87" y="1279.38" width="7.60" height="7.60" fill="#4a0e9e" />
<rect x="1519.10" y="1301.14" width="7.60" height="7.60" fill="#4a0e9e" />
<rect x="1615.33" y="1301.91" width="7.60" height="7.60" fill="#4a0e9e" />
<rect x="1711.56" y="1313.56" width="7.60" height="7.60" fill="#4a0e9e" />
<rect x="1807.79" y="1315.50" width="7.60" height="7.60" fill="#4a0e9e" />
<rect x="1904.02" y="1275.51" width="7.60" height="7.60" fill="#4a0e9e" />
<rect x="2000.25" y="1286.76" width="7.60" height="7.60" fill="#4a0e9e" />
<rect x="2096.48" y="1280.56" width="7.60" height="7.60" fill="#4a0e9e" />
<rect x="2192.71" y="1290.80" width="7.60" height="7.60" fill="#4a0e9e" />
<rect x="2288.94" y="1307.06" width="7.60" height="7.60" fill="#4a0e9e" />
<rect x="2385.17" y="1305.78" width="7.60" height="7.60" fill="#4a0e9e" />
<rect x="2481.40" y="1312.20" width="7.60" height="7.60" fill="#4a0e9e" />
<rect x="2577.63" y="1280.53" width="7.60" height="7.60" fill="#4a0e9e" />
<rect x="2673.86" y="1296.36" width="7.60" height="7.60" fill="#4a0e9e" />
<rect x="2770.09" y="1302.79" width="7.60" height="7.60" fill="#4a0e9e" />
<rect x="2866.32" y="1293.36" width="7.60" height="7.60" fill="#4a0e9e" />
<rect x="2962.55" y="1298.08" width="7.60" height="7.60" fill="#4a0e9e" />
<rect x="3058.78" y="1271.96" width="7.60" height="7.60" fill="#4a0e9e" />
<line x1="223.8" y1="1371.0" x2="3110.7" y2="1371.0" stroke="#2ab1d6" stroke-width="3.2"/>
<circle cx="271.92" cy="1371.0" r="3.6" fill="#2ab1d6"/>
<circle cx="368.14" cy="1371.0" r="3.6" fill="#2ab1d6"/>
<circle cx="464.38" cy="1371.0" r="3.6" fill="#2ab1d6"/>
<circle cx="560.61" cy="1371.0" r="3.6" fill="#2ab1d6"/>
<circle cx="656.84" cy="1371.0" r="3.6" fill="#2ab1d6"/>
<circle cx="753.07" cy="1371.0" r="3.6" fill="#2ab1d6"/>
<circle cx="849.29" cy="1371.0" r="3.6" fill="#2ab1d6"/>
<circle cx="945.52" cy="1371.0" r="3.6" fill="#2ab1d6"/>
<circle cx="1041.75" cy="1371.0" r="3.6" fill="#2ab1d6"/>
<circle cx="1137.98" cy="1371.0" r="3.6" fill="#2ab1d6"/>
<circle cx="1234.21" cy="1371.0" r="3.6" fill="#2ab1d6"/>
<circle cx="1330.44" cy="1371.0" r="3.6" fill="#2ab1d6"/>
<circle cx="1426.67" cy="1371.0" r="3.6" fill="#2ab1d6"/>
<circle cx="1522.90" cy="1371.0" r="3.6" fill="#2ab1d6"/>
<circle cx="1619.13" cy="1371.0" r="3.6" fill="#2ab1d6"/>
<circle cx="1715.36" cy="1371.0" r="3.6" fill="#2ab1d6"/>
<circle cx="1811.59" cy="1371.0" r="3.6" fill="#2ab1d6"/>
<circle cx="1907.82" cy="1371.0" r="3.6" fill="#2ab1d6"/>
<circle cx="2004.05" cy="1371.0" r="3.6" fill="#2ab1d6"/>
<circle cx="2100.28" cy="1371.0" r="3.6" fill="#2ab1d6"/>
<circle cx="2196.51" cy="1371.0" r="3.6" fill="#2ab1d6"/>
<circle cx="2292.74" cy="1371.0" r="3.6" fill="#2ab1d6"/>
<circle cx="2388.97" cy="1371.0" r="3.6" fill="#2ab1d6"/>
<circle cx="2485.20" cy="1371.0" r="3.6" fill="#2ab1d6"/>
<circle cx="2581.43" cy="1371.0" r="3.6" fill="#2ab1d6"/>
<circle cx="2677.66" cy="1371.0" r="3.6" fill="#2ab1d6"/>
<circle cx="2773.89" cy="1371.0" r="3.6" fill="#2ab1d6"/>
<circle cx="2870.12" cy="1371.0" r="3.6" fill="#2ab1d6"/>
<circle cx="2966.36" cy="1371.0" r="3.6" fill="#2ab1d6"/>
<circle cx="3062.59" cy="1371.0" r="3.6" fill="#2ab1d6"/>
<text x="1643.5" y="1400.2" font-family="Liberation Sans" font-size="22" font-weight="bold" fill="#6e6e6e" text-anchor="middle" >Performance - Mon. Feb 09, 2026 - Tue. Mar 10, 2026</text>
<line x1="219.60" y1="1486.50" x2="3155.00" y2="1486.50" stroke="#e0e6f1" stroke-width="1.2" />
<line x1="219.60" y1="1489.19" x2="3155.00" y2="1489.19" stroke="#e0e6f1" stroke-width="1.2" />
<line x1="219.60" y1="1491.88" x2="3155.00" y2="1491.88" stroke="#e0e6f1" stroke-width="1.2" />
<line x1="219.60" y1="1494.56" x2="3155.00" y2="1494.56" stroke="#e0e6f1" stroke-width="1.2" />
<line x1="219.60" y1="1497.25" x2="3155.00" y2="1497.25" stroke="#e0e6f1" stroke-width="1.2" />
<line x1="219.60" y1="1499.94" x2="3155.00" y2="1499.94" stroke="#e0e6f1" stroke-width="1.2" />
<line x1="219.60" y1="1502.62" x2="3155.00" y2="1502.62" stroke="#e0e6f1" stroke-width="1.2" />
<line x1="219.60" y1="1505.31" x2="3155.00" y2="1505.31" stroke="#e0e6f1" stroke-width="1.2" />
<line x1="219.60" y1="1508.00" x2="3155.00" y2="1508.00" stroke="#e0e6f1" stroke-width="1.2" />
<path d="M219.60,1508.00 V1486.00 H3155.00 V1508.00" fill="none" stroke="#cfcfcf" stroke-width="1.2"/>
<rect x="234.52" y="1487.30" width="56.00" height="6.70" fill="#a50b62" />
<rect x="332.37" y="1490.30" width="56.00" height="4.70" fill="#a50b62" />
<rect x="430.22" y="1490.30" width="56.00" height="11.70" fill="#a50b62" />
<rect x="528.06" y="1490.30" width="56.00" height="5.70" fill="#a50b62" />
<rect x="625.91" y="1490.30" width="56.00" height="5.70" fill="#a50b62" />
<rect x="723.76" y="1490.30" width="56.00" height="1.00" fill="#a50b62" />
<rect x="821.60" y="1490.30" width="56.00" height="7.40" fill="#a50b62" />
<rect x="919.45" y="1490.30" width="56.00" height="9.90" fill="#a50b62" />
<rect x="1017.30" y="1490.30" width="56.00" height="3.10" fill="#a50b62" />
<rect x="1115.14" y="1490.30" width="56.00" height="5.40" fill="#a50b62" />
<rect x="1212.99" y="1490.30" width="56.00" height="2.40" fill="#a50b62" />
<rect x="1310.84" y="1490.30" width="56.00" height="12.50" fill="#a50b62" />
<rect x="1408.68" y="1490.30" width="56.00" height="1.00" fill="#a50b62" />
<rect x="1506.53" y="1490.30" width="56.00" height="13.70" fill="#a50b62" />
<rect x="1604.38" y="1490.30" width="56.00" height="7.40" fill="#a50b62" />
<rect x="1702.22" y="1490.30" width="56.00" height="5.70" fill="#a50b62" />
<rect x="1800.07" y="1490.30" width="56.00" height="6.10" fill="#a50b62" />
<rect x="1897.92" y="1490.30" width="56.00" height="6.10" fill="#a50b62" />
<rect x="1995.76" y="1490.30" width="56.00" height="4.40" fill="#a50b62" />
<rect x="2093.61" y="1490.30" width="56.00" height="2.40" fill="#a50b62" />
<rect x="2191.46" y="1490.30" width="56.00" height="8.70" fill="#a50b62" />
<rect x="2289.30" y="1490.30" width="56.00" height="4.40" fill="#a50b62" />
<rect x="2387.15" y="1490.30" width="56.00" height="4.40" fill="#a50b62" />
<rect x="2485.00" y="1490.30" width="56.00" height="3.70" fill="#a50b62" />
<rect x="2582.84" y="1490.30" width="56.00" height="4.90" fill="#a50b62" />
<rect x="2680.69" y="1490.30" width="56.00" height="7.90" fill="#a50b62" />
<rect x="2778.54" y="1490.30" width="56.00" height="6.10" fill="#a50b62" />
<rect x="2876.38" y="1490.30" width="56.00" height="2.40" fill="#a50b62" />
<rect x="2974.23" y="1490.30" width="56.00" height="16.20" fill="#a50b62" />
<rect x="3072.08" y="1487.30" width="56.00" height="7.40" fill="#a50b62" />
<polyline points="268.5,1495.6 366.4,1492.6 464.2,1490.3 562.1,1492.6 659.9,1499.6 757.8,1499.0 855.6,1490.6 953.5,1494.0 1051.3,1494.0 1149.1,1492.0 1247.0,1495.0 1344.8,1493.0 1442.7,1505.8 1540.5,1488.9 1638.4,1490.0 1736.2,1492.0 1834.1,1493.0 1931.9,1501.5 2029.8,1497.7 2127.6,1496.4 2225.5,1490.0 2323.3,1500.2 2421.1,1497.7 2519.0,1493.0 2616.8,1501.5 2714.7,1493.0 2812.5,1490.0 2910.4,1500.2 3008.2,1490.0 3106.1,1497.2" fill="none" stroke="#707070" stroke-width="3"/>
<line x1="268.5" y1="1489.6" x2="3106.1" y2="1489.6" stroke="#707070" stroke-width="2.6"/>
<line x1="268.5" y1="1487.1" x2="3106.1" y2="1487.1" stroke="#1fa5ee" stroke-width="3"/>
<rect x="264.52" y="1483.30" width="8.00" height="8.00" fill="#1fa5ee" />
<rect x="362.37" y="1483.30" width="8.00" height="8.00" fill="#1fa5ee" />
<rect x="460.22" y="1483.30" width="8.00" height="8.00" fill="#1fa5ee" />
<rect x="558.06" y="1483.30" width="8.00" height="8.00" fill="#1fa5ee" />
<rect x="655.91" y="1483.30" width="8.00" height="8.00" fill="#1fa5ee" />
<rect x="753.76" y="1483.30" width="8.00" height="8.00" fill="#1fa5ee" />
<rect x="851.60" y="1483.30" width="8.00" height="8.00" fill="#1fa5ee" />
<rect x="949.45" y="1483.30" width="8.00" height="8.00" fill="#1fa5ee" />
<rect x="1047.30" y="1483.30" width="8.00" height="8.00" fill="#1fa5ee" />
<rect x="1145.14" y="1483.30" width="8.00" height="8.00" fill="#1fa5ee" />
<rect x="1242.99" y="1483.30" width="8.00" height="8.00" fill="#1fa5ee" />
<rect x="1340.84" y="1483.30" width="8.00" height="8.00" fill="#1fa5ee" />
<rect x="1438.68" y="1483.30" width="8.00" height="8.00" fill="#1fa5ee" />
<rect x="1536.53" y="1483.30" width="8.00" height="8.00" fill="#1fa5ee" />
<rect x="1634.38" y="1483.30" width="8.00" height="8.00" fill="#1fa5ee" />
<rect x="1732.22" y="1483.30" width="8.00" height="8.00" fill="#1fa5ee" />
<rect x="1830.07" y="1483.30" width="8.00" height="8.00" fill="#1fa5ee" />
<rect x="1927.92" y="1483.30" width="8.00" height="8.00" fill="#1fa5ee" />
<rect x="2025.76" y="1483.30" width="8.00" height="8.00" fill="#1fa5ee" />
<rect x="2123.61" y="1483.30" width="8.00" height="8.00" fill="#1fa5ee" />
<rect x="2221.46" y="1483.30" width="8.00" height="8.00" fill="#1fa5ee" />
<rect x="2319.30" y="1483.30" width="8.00" height="8.00" fill="#1fa5ee" />
<rect x="2417.15" y="1483.30" width="8.00" height="8.00" fill="#1fa5ee" />
<rect x="2515.00" y="1483.30" width="8.00" height="8.00" fill="#1fa5ee" />
<rect x="2612.84" y="1483.30" width="8.00" height="8.00" fill="#1fa5ee" />
<rect x="2710.69" y="1483.30" width="8.00" height="8.00" fill="#1fa5ee" />
<rect x="2808.54" y="1483.30" width="8.00" height="8.00" fill="#1fa5ee" />
<rect x="2906.38" y="1483.30" width="8.00" height="8.00" fill="#1fa5ee" />
<rect x="3004.23" y="1483.30" width="8.00" height="8.00" fill="#1fa5ee" />
<rect x="3102.08" y="1483.30" width="8.00" height="8.00" fill="#1fa5ee" />
<line x1="219.60" y1="1508.00" x2="3155.00" y2="1508.00" stroke="#6e7079" stroke-width="1.6" />
<line x1="219.60" y1="1508.00" x2="219.60" y2="1514.00" stroke="#6e7079" stroke-width="1.4" />
<line x1="317.45" y1="1508.00" x2="317.45" y2="1514.00" stroke="#6e7079" stroke-width="1.4" />
<line x1="415.29" y1="1508.00" x2="415.29" y2="1514.00" stroke="#6e7079" stroke-width="1.4" />
<line x1="513.14" y1="1508.00" x2="513.14" y2="1514.00" stroke="#6e7079" stroke-width="1.4" />
<line x1="610.99" y1="1508.00" x2="610.99" y2="1514.00" stroke="#6e7079" stroke-width="1.4" />
<line x1="708.83" y1="1508.00" x2="708.83" y2="1514.00" stroke="#6e7079" stroke-width="1.4" />
<line x1="806.68" y1="1508.00" x2="806.68" y2="1514.00" stroke="#6e7079" stroke-width="1.4" />
<line x1="904.53" y1="1508.00" x2="904.53" y2="1514.00" stroke="#6e7079" stroke-width="1.4" />
<line x1="1002.37" y1="1508.00" x2="1002.37" y2="1514.00" stroke="#6e7079" stroke-width="1.4" />
<line x1="1100.22" y1="1508.00" x2="1100.22" y2="1514.00" stroke="#6e7079" stroke-width="1.4" />
<line x1="1198.07" y1="1508.00" x2="1198.07" y2="1514.00" stroke="#6e7079" stroke-width="1.4" />
<line x1="1295.91" y1="1508.00" x2="1295.91" y2="1514.00" stroke="#6e7079" stroke-width="1.4" />
<line x1="1393.76" y1="1508.00" x2="1393.76" y2="1514.00" stroke="#6e7079" stroke-width="1.4" />
<line x1="1491.61" y1="1508.00" x2="1491.61" y2="1514.00" stroke="#6e7079" stroke-width="1.4" />
<line x1="1589.45" y1="1508.00" x2="1589.45" y2="1514.00" stroke="#6e7079" stroke-width="1.4" />
<line x1="1687.30" y1="1508.00" x2="1687.30" y2="1514.00" stroke="#6e7079" stroke-width="1.4" />
<line x1="1785.15" y1="1508.00" x2="1785.15" y2="1514.00" stroke="#6e7079" stroke-width="1.4" />
<line x1="1882.99" y1="1508.00" x2="1882.99" y2="1514.00" stroke="#6e7079" stroke-width="1.4" />
<line x1="1980.84" y1="1508.00" x2="1980.84" y2="1514.00" stroke="#6e7079" stroke-width="1.4" />
<line x1="2078.69" y1="1508.00" x2="2078.69" y2="1514.00" stroke="#6e7079" stroke-width="1.4" />
<line x1="2176.53" y1="1508.00" x2="2176.53" y2="1514.00" stroke="#6e7079" stroke-width="1.4" />
<line x1="2274.38" y1="1508.00" x2="2274.38" y2="1514.00" stroke="#6e7079" stroke-width="1.4" />
<line x1="2372.23" y1="1508.00" x2="2372.23" y2="1514.00" stroke="#6e7079" stroke-width="1.4" />
<line x1="2470.07" y1="1508.00" x2="2470.07" y2="1514.00" stroke="#6e7079" stroke-width="1.4" />
<line x1="2567.92" y1="1508.00" x2="2567.92" y2="1514.00" stroke="#6e7079" stroke-width="1.4" />
<line x1="2665.77" y1="1508.00" x2="2665.77" y2="1514.00" stroke="#6e7079" stroke-width="1.4" />
<line x1="2763.61" y1="1508.00" x2="2763.61" y2="1514.00" stroke="#6e7079" stroke-width="1.4" />
<line x1="2861.46" y1="1508.00" x2="2861.46" y2="1514.00" stroke="#6e7079" stroke-width="1.4" />
<line x1="2959.31" y1="1508.00" x2="2959.31" y2="1514.00" stroke="#6e7079" stroke-width="1.4" />
<line x1="3057.15" y1="1508.00" x2="3057.15" y2="1514.00" stroke="#6e7079" stroke-width="1.4" />
<line x1="3155.00" y1="1508.00" x2="3155.00" y2="1514.00" stroke="#6e7079" stroke-width="1.4" />
<text x="209.0" y="1493.0" font-family="Liberation Sans" font-size="19.5" font-weight="normal" fill="#6e7079" text-anchor="end" >15%</text>
<text x="209.0" y="1497.5" font-family="Liberation Sans" font-size="19.5" font-weight="normal" fill="#6e7079" text-anchor="end" >10%</text>
<text x="209.0" y="1500.0" font-family="Liberation Sans" font-size="19.5" font-weight="normal" fill="#6e7079" text-anchor="end" >20%</text>
<text x="209.0" y="1503.5" font-family="Liberation Sans" font-size="19.5" font-weight="normal" fill="#6e7079" text-anchor="end" >25%</text>
<text x="209.0" y="1506.0" font-family="Liberation Sans" font-size="19.5" font-weight="normal" fill="#6e7079" text-anchor="end" >30%</text>
<text x="168.0" y="1545.5" font-family="Liberation Sans" font-size="19.5" font-weight="normal" fill="#6e7079" text-anchor="start" >Percentage</text>
<text x="266.5" y="1498.5" font-family="Liberation Sans" font-size="20" fill="#6e7079" text-anchor="end" dominant-baseline="central" transform="rotate(-45 266.5 1498.5)">Mon, Feb 09, 2026</text>
<text x="364.4" y="1498.5" font-family="Liberation Sans" font-size="20" fill="#6e7079" text-anchor="end" dominant-baseline="central" transform="rotate(-45 364.4 1498.5)">Tue, Feb 10, 2026</text>
<text x="462.2" y="1498.5" font-family="Liberation Sans" font-size="20" fill="#6e7079" text-anchor="end" dominant-baseline="central" transform="rotate(-45 462.2 1498.5)">Wed, Feb 11, 2026</text>
<text x="560.1" y="1498.5" font-family="Liberation Sans" font-size="20" fill="#6e7079" text-anchor="end" dominant-baseline="central" transform="rotate(-45 560.1 1498.5)">Thu, Feb 12, 2026</text>
<text x="657.9" y="1498.5" font-family="Liberation Sans" font-size="20" fill="#6e7079" text-anchor="end" dominant-baseline="central" transform="rotate(-45 657.9 1498.5)">Fri, Feb 13, 2026</text>
<text x="755.8" y="1498.5" font-family="Liberation Sans" font-size="20" fill="#6e7079" text-anchor="end" dominant-baseline="central" transform="rotate(-45 755.8 1498.5)">Sat, Feb 14, 2026</text>
<text x="853.6" y="1498.5" font-family="Liberation Sans" font-size="20" fill="#6e7079" text-anchor="end" dominant-baseline="central" transform="rotate(-45 853.6 1498.5)">Sun, Feb 15, 2026</text>
<text x="951.5" y="1498.5" font-family="Liberation Sans" font-size="20" fill="#6e7079" text-anchor="end" dominant-baseline="central" transform="rotate(-45 951.5 1498.5)">Mon, Feb 16, 2026</text>
<text x="1049.3" y="1498.5" font-family="Liberation Sans" font-size="20" fill="#6e7079" text-anchor="end" dominant-baseline="central" transform="rotate(-45 1049.3 1498.5)">Tue, Feb 17, 2026</text>
<text x="1147.1" y="1498.5" font-family="Liberation Sans" font-size="20" fill="#6e7079" text-anchor="end" dominant-baseline="central" transform="rotate(-45 1147.1 1498.5)">Wed, Feb 18, 2026</text>
<text x="1245.0" y="1498.5" font-family="Liberation Sans" font-size="20" fill="#6e7079" text-anchor="end" dominant-baseline="central" transform="rotate(-45 1245.0 1498.5)">Thu, Feb 19, 2026</text>
<text x="1342.8" y="1498.5" font-family="Liberation Sans" font-size="20" fill="#6e7079" text-anchor="end" dominant-baseline="central" transform="rotate(-45 1342.8 1498.5)">Fri, Feb 20, 2026</text>
<text x="1440.7" y="1498.5" font-family="Liberation Sans" font-size="20" fill="#6e7079" text-anchor="end" dominant-baseline="central" transform="rotate(-45 1440.7 1498.5)">Sat, Feb 21, 2026</text>
<text x="1538.5" y="1498.5" font-family="Liberation Sans" font-size="20" fill="#6e7079" text-anchor="end" dominant-baseline="central" transform="rotate(-45 1538.5 1498.5)">Sun, Feb 22, 2026</text>
<text x="1636.4" y="1498.5" font-family="Liberation Sans" font-size="20" fill="#6e7079" text-anchor="end" dominant-baseline="central" transform="rotate(-45 1636.4 1498.5)">Mon, Feb 23, 2026</text>
<text x="1734.2" y="1498.5" font-family="Liberation Sans" font-size="20" fill="#6e7079" text-anchor="end" dominant-baseline="central" transform="rotate(-45 1734.2 1498.5)">Tue, Feb 24, 2026</text>
<text x="1832.1" y="1498.5" font-family="Liberation Sans" font-size="20" fill="#6e7079" text-anchor="end" dominant-baseline="central" transform="rotate(-45 1832.1 1498.5)">Wed, Feb 25, 2026</text>
<text x="1929.9" y="1498.5" font-family="Liberation Sans" font-size="20" fill="#6e7079" text-anchor="end" dominant-baseline="central" transform="rotate(-45 1929.9 1498.5)">Thu, Feb 26, 2026</text>
<text x="2027.8" y="1498.5" font-family="Liberation Sans" font-size="20" fill="#6e7079" text-anchor="end" dominant-baseline="central" transform="rotate(-45 2027.8 1498.5)">Fri, Feb 27, 2026</text>
<text x="2125.6" y="1498.5" font-family="Liberation Sans" font-size="20" fill="#6e7079" text-anchor="end" dominant-baseline="central" transform="rotate(-45 2125.6 1498.5)">Sat, Feb 28, 2026</text>
<text x="2223.5" y="1498.5" font-family="Liberation Sans" font-size="20" fill="#6e7079" text-anchor="end" dominant-baseline="central" transform="rotate(-45 2223.5 1498.5)">Sun, Mar 01, 2026</text>
<text x="2321.3" y="1498.5" font-family="Liberation Sans" font-size="20" fill="#6e7079" text-anchor="end" dominant-baseline="central" transform="rotate(-45 2321.3 1498.5)">Mon, Mar 02, 2026</text>
<text x="2419.1" y="1498.5" font-family="Liberation Sans" font-size="20" fill="#6e7079" text-anchor="end" dominant-baseline="central" transform="rotate(-45 2419.1 1498.5)">Tue, Mar 03, 2026</text>
<text x="2517.0" y="1498.5" font-family="Liberation Sans" font-size="20" fill="#6e7079" text-anchor="end" dominant-baseline="central" transform="rotate(-45 2517.0 1498.5)">Wed, Mar 04, 2026</text>
<text x="2614.8" y="1498.5" font-family="Liberation Sans" font-size="20" fill="#6e7079" text-anchor="end" dominant-baseline="central" transform="rotate(-45 2614.8 1498.5)">Thu, Mar 05, 2026</text>
<text x="2712.7" y="1498.5" font-family="Liberation Sans" font-size="20" fill="#6e7079" text-anchor="end" dominant-baseline="central" transform="rotate(-45 2712.7 1498.5)">Fri, Mar 06, 2026</text>
<text x="2810.5" y="1498.5" font-family="Liberation Sans" font-size="20" fill="#6e7079" text-anchor="end" dominant-baseline="central" transform="rotate(-45 2810.5 1498.5)">Sat, Mar 07, 2026</text>
<text x="2908.4" y="1498.5" font-family="Liberation Sans" font-size="20" fill="#6e7079" text-anchor="end" dominant-baseline="central" transform="rotate(-45 2908.4 1498.5)">Sun, Mar 08, 2026</text>
<text x="3006.2" y="1498.5" font-family="Liberation Sans" font-size="20" fill="#6e7079" text-anchor="end" dominant-baseline="central" transform="rotate(-45 3006.2 1498.5)">Mon, Mar 09, 2026</text>
<text x="3104.1" y="1498.5" font-family="Liberation Sans" font-size="20" fill="#6e7079" text-anchor="end" dominant-baseline="central" transform="rotate(-45 3104.1 1498.5)">Tue, Mar 10, 2026</text>
<rect x="218" y="1733" width="2908" height="10" rx="2" fill="#dfe4f0"/>
<rect x="218.00" y="1743.00" width="2908.00" height="44.00" fill="#e7eefc" />
<polygon points="218,1787 218.0,1765.8 318.3,1770.0 418.6,1767.9 518.8,1759.4 619.1,1757.3 719.4,1765.8 819.7,1774.3 919.9,1763.7 1020.2,1763.7 1120.5,1770.0 1220.8,1765.8 1321.0,1763.7 1421.3,1759.4 1521.6,1776.4 1621.9,1767.9 1722.1,1765.8 1822.4,1774.3 1922.7,1761.6 2023.0,1757.3 2123.2,1763.7 2223.5,1767.9 2323.8,1759.4 2424.1,1763.7 2524.3,1772.2 2624.6,1759.4 2724.9,1763.7 2825.2,1763.7 2925.4,1763.7 3025.7,1772.2 3126.0,1751.0 3126,1787" fill="#d4e0f9"/>
<polyline points="218.0,1765.8 318.3,1770.0 418.6,1767.9 518.8,1759.4 619.1,1757.3 719.4,1765.8 819.7,1774.3 919.9,1763.7 1020.2,1763.7 1120.5,1770.0 1220.8,1765.8 1321.0,1763.7 1421.3,1759.4 1521.6,1776.4 1621.9,1767.9 1722.1,1765.8 1822.4,1774.3 1922.7,1761.6 2023.0,1757.3 2123.2,1763.7 2223.5,1767.9 2323.8,1759.4 2424.1,1763.7 2524.3,1772.2 2624.6,1759.4 2724.9,1763.7 2825.2,1763.7 2925.4,1763.7 3025.7,1772.2 3126.0,1751.0" fill="none" stroke="#a4bff2" stroke-width="1.3"/>
<line x1="218.00" y1="1743.00" x2="218.00" y2="1787.00" stroke="#acb8d1" stroke-width="2" />
<line x1="3126.00" y1="1743.00" x2="3126.00" y2="1787.00" stroke="#acb8d1" stroke-width="2" />
<rect x="214" y="1750.8" width="9" height="27.7" rx="2.5" fill="#fff" stroke="#acb8d1" stroke-width="1.4"/>
<rect x="3122" y="1750.8" width="9" height="27.7" rx="2.5" fill="#fff" stroke="#acb8d1" stroke-width="1.4"/>
<line x1="1669.50" y1="1735.00" x2="1669.50" y2="1740.00" stroke="#fff" stroke-width="1" />
<line x1="1671.70" y1="1735.00" x2="1671.70" y2="1740.00" stroke="#fff" stroke-width="1" />
<line x1="1673.90" y1="1735.00" x2="1673.90" y2="1740.00" stroke="#fff" stroke-width="1" />
<g fill="none" stroke="#6e6e6e" stroke-width="1.8">
<path d="M2902,700 V709 H2922.5 V700 M2912.2,686 V704 M2905.5,697.5 L2912.2,704 L2919,697.5"/>
<path d="M2941,706 H2960 V709 H2941 Z M2946,702 V694 H2942 L2950.5,685.5 L2959,694 H2955 V702 Z"/>
<path d="M2999.5,695 A10.5,10.5 0 0 0 2980,694.5 M2980.5,702 A10.5,10.5 0 0 0 3000,702.5 M2996,689 L3000,694.5 L2994,695.5 M2984.5,708 L2980.5,702 L2986.5,701.5"/>
<path d="M3026,688 V709 H3044.5 V690.5 H3030.5 M3021,690.5 H3031"/>
<path d="M3062,709 H3080.5 V690.5 H3064 M3062,709 V697 M3068,685.5 L3064,690.5 L3068,695"/>
<path d="M3099,686 H3110 L3116,692 V709 H3099 Z M3110,686 V692 H3116 M3102.5,695.5 H3112.5 M3102.5,699.5 H3112.5 M3102.5,703.5 H3112.5"/>
<path d="M3135,709 H3158 M3135,700.5 L3139.5,700.5 L3142.5,684.5 L3146.5,702 L3149.5,696 L3152,700 H3158"/>
<path d="M3177.5,709 H3199 M3178.5,707 V693.5 H3182 V707 M3185.5,707 V690 H3189 V707 M3192.5,707 V686 H3196 V707"/>
<path d="M3218,697.5 H3241 M3223,692.5 L3218,697.5 L3223,702.5 M3236,692.5 L3241,697.5 L3236,702.5"/>
</g>
<path d="M3293.6,707.90 L3301.2,715.50 L3308.7999999999997,707.90" fill="none" stroke="#111" stroke-width="3.5" stroke-linejoin="miter"/>
<text x="3320.3" y="722.5" font-family="Liberation Sans" font-size="24" font-weight="bold" fill="#384654" text-anchor="start" textLength="57" lengthAdjust="spacingAndGlyphs">Sales</text>
<g transform="translate(0,0.00)">
<rect x="3320.6" y="739.6" width="27.9" height="27.8" rx="4.5" fill="none" stroke="#d4834a" stroke-width="1.1"/>
<path d="M3328.6,759.3 L3335.2,752.7" stroke="#d4834a" stroke-width="3.2" stroke-linecap="round"/>
<path d="M3329.6,758.3 L3334.6,753.3" stroke="#fff" stroke-width="1.1"/>
<path d="M3334,750.4 L3338.6,755" stroke="#d4834a" stroke-width="2.4" stroke-linecap="round"/>
<circle cx="3338.4" cy="749.9" r="2.6" fill="#d4834a"/>
<g fill="none" stroke="#d4834a" stroke-linecap="round">
<path d="M3371,747.4 Q3362,746.5 3357.3,754.3 Q3359.5,758 3364,760.3" stroke-width="1.7"/>
<path d="M3372.3,746.5 L3364.2,761.5" stroke-width="2.5"/>
<path d="M3369.5,748.8 Q3364,750 3365.6,757.6" stroke-width="2.4"/>
<path d="M3373.4,750.3 Q3376.5,752 3377.3,754.3 Q3374,759.5 3367.6,760.7" stroke-width="1.7"/>
<path d="M3369.5,757.3 Q3371.6,755.5 3371.2,752.5" stroke-width="1.2"/>
</g>
</g>
<text x="3386.0" y="760.0" font-family="Liberation Sans" font-size="19" font-weight="normal" fill="#d4834a" text-anchor="start" textLength="55.9" lengthAdjust="spacingAndGlyphs">Orders</text>
<text x="3775.5" y="759.8" font-family="Liberation Mono" font-size="17" font-weight="normal" fill="#d4834a" text-anchor="end" >311</text>
<g transform="translate(0,45.90)">
<rect x="3320.6" y="739.6" width="27.9" height="27.8" rx="4.5" fill="none" stroke="#a0524f" stroke-width="1.1"/>
<path d="M3328.6,759.3 L3335.2,752.7" stroke="#a0524f" stroke-width="3.2" stroke-linecap="round"/>
<path d="M3329.6,758.3 L3334.6,753.3" stroke="#fff" stroke-width="1.1"/>
<path d="M3334,750.4 L3338.6,755" stroke="#a0524f" stroke-width="2.4" stroke-linecap="round"/>
<circle cx="3338.4" cy="749.9" r="2.6" fill="#a0524f"/>
<g fill="none" stroke="#a0524f" stroke-linecap="round">
<path d="M3371,747.4 Q3362,746.5 3357.3,754.3 Q3359.5,758 3364,760.3" stroke-width="1.7"/>
<path d="M3372.3,746.5 L3364.2,761.5" stroke-width="2.5"/>
<path d="M3369.5,748.8 Q3364,750 3365.6,757.6" stroke-width="2.4"/>
<path d="M3373.4,750.3 Q3376.5,752 3377.3,754.3 Q3374,759.5 3367.6,760.7" stroke-width="1.7"/>
<path d="M3369.5,757.3 Q3371.6,755.5 3371.2,752.5" stroke-width="1.2"/>
</g>
</g>
<text x="3386.0" y="805.9" font-family="Liberation Sans" font-size="19" font-weight="normal" fill="#a0524f" text-anchor="start" textLength="41.2" lengthAdjust="spacingAndGlyphs">Sales</text>
<text x="3775.5" y="805.7" font-family="Liberation Mono" font-size="17" font-weight="normal" fill="#a0524f" text-anchor="end" >$17,570.00</text>
<line x1="3282.30" y1="823.20" x2="3776.00" y2="823.20" stroke="#e6e6e6" stroke-width="1.3" />
<path d="M3293.6,848.70 L3301.2,856.30 L3308.7999999999997,848.70" fill="none" stroke="#111" stroke-width="3.5" stroke-linejoin="miter"/>
<text x="3320.3" y="863.3" font-family="Liberation Sans" font-size="24" font-weight="bold" fill="#384654" text-anchor="start" textLength="51.7" lengthAdjust="spacingAndGlyphs">Cost</text>
<g transform="translate(0,140.90)">
<rect x="3320.6" y="739.6" width="27.9" height="27.8" rx="4.5" fill="none" stroke="#5cc96b" stroke-width="1.1"/>
<path d="M3328.6,759.3 L3335.2,752.7" stroke="#5cc96b" stroke-width="3.2" stroke-linecap="round"/>
<path d="M3329.6,758.3 L3334.6,753.3" stroke="#fff" stroke-width="1.1"/>
<path d="M3334,750.4 L3338.6,755" stroke="#5cc96b" stroke-width="2.4" stroke-linecap="round"/>
<circle cx="3338.4" cy="749.9" r="2.6" fill="#5cc96b"/>
<g fill="none" stroke="#5cc96b" stroke-linecap="round">
<path d="M3371,747.4 Q3362,746.5 3357.3,754.3 Q3359.5,758 3364,760.3" stroke-width="1.7"/>
<path d="M3372.3,746.5 L3364.2,761.5" stroke-width="2.5"/>
<path d="M3369.5,748.8 Q3364,750 3365.6,757.6" stroke-width="2.4"/>
<path d="M3373.4,750.3 Q3376.5,752 3377.3,754.3 Q3374,759.5 3367.6,760.7" stroke-width="1.7"/>
<path d="M3369.5,757.3 Q3371.6,755.5 3371.2,752.5" stroke-width="1.2"/>
</g>
</g>
<text x="3386.0" y="900.9" font-family="Liberation Sans" font-size="19" font-weight="normal" fill="#5cc96b" text-anchor="start" textLength="91.8" lengthAdjust="spacingAndGlyphs">Total spent</text>
<text x="3775.5" y="900.7" font-family="Liberation Mono" font-size="17" font-weight="normal" fill="#5cc96b" text-anchor="end" >$2,254.83</text>
<g transform="translate(0,186.80)">
<rect x="3320.6" y="739.6" width="27.9" height="27.8" rx="4.5" fill="none" stroke="#3e6fa0" stroke-width="1.1"/>
<path d="M3328.6,759.3 L3335.2,752.7" stroke="#3e6fa0" stroke-width="3.2" stroke-linecap="round"/>
<path d="M3329.6,758.3 L3334.6,753.3" stroke="#fff" stroke-width="1.1"/>
<path d="M3334,750.4 L3338.6,755" stroke="#3e6fa0" stroke-width="2.4" stroke-linecap="round"/>
<circle cx="3338.4" cy="749.9" r="2.6" fill="#3e6fa0"/>
<g fill="none" stroke="#3e6fa0" stroke-linecap="round">
<path d="M3371,747.4 Q3362,746.5 3357.3,754.3 Q3359.5,758 3364,760.3" stroke-width="1.7"/>
<path d="M3372.3,746.5 L3364.2,761.5" stroke-width="2.5"/>
<path d="M3369.5,748.8 Q3364,750 3365.6,757.6" stroke-width="2.4"/>
<path d="M3373.4,750.3 Q3376.5,752 3377.3,754.3 Q3374,759.5 3367.6,760.7" stroke-width="1.7"/>
<path d="M3369.5,757.3 Q3371.6,755.5 3371.2,752.5" stroke-width="1.2"/>
</g>
</g>
<text x="3386.0" y="946.8" font-family="Liberation Sans" font-size="19" font-weight="normal" fill="#3e6fa0" text-anchor="start" textLength="159.2" lengthAdjust="spacingAndGlyphs">Average Cost/Click</text>
<text x="3775.5" y="946.6" font-family="Liberation Mono" font-size="17" font-weight="normal" fill="#3e6fa0" text-anchor="end" >$0.88</text>
<g transform="translate(0,232.70)">
<rect x="3320.6" y="739.6" width="27.9" height="27.8" rx="4.5" fill="none" stroke="#8e6fa8" stroke-width="1.1"/>
<path d="M3328.6,759.3 L3335.2,752.7" stroke="#8e6fa8" stroke-width="3.2" stroke-linecap="round"/>
<path d="M3329.6,758.3 L3334.6,753.3" stroke="#fff" stroke-width="1.1"/>
<path d="M3334,750.4 L3338.6,755" stroke="#8e6fa8" stroke-width="2.4" stroke-linecap="round"/>
<circle cx="3338.4" cy="749.9" r="2.6" fill="#8e6fa8"/>
<g fill="none" stroke="#8e6fa8" stroke-linecap="round">
<path d="M3371,747.4 Q3362,746.5 3357.3,754.3 Q3359.5,758 3364,760.3" stroke-width="1.7"/>
<path d="M3372.3,746.5 L3364.2,761.5" stroke-width="2.5"/>
<path d="M3369.5,748.8 Q3364,750 3365.6,757.6" stroke-width="2.4"/>
<path d="M3373.4,750.3 Q3376.5,752 3377.3,754.3 Q3374,759.5 3367.6,760.7" stroke-width="1.7"/>
<path d="M3369.5,757.3 Q3371.6,755.5 3371.2,752.5" stroke-width="1.2"/>
</g>
</g>
<text x="3386.0" y="992.7" font-family="Liberation Sans" font-size="19" font-weight="normal" fill="#8e6fa8" text-anchor="start" textLength="167.4" lengthAdjust="spacingAndGlyphs">Average Cost/Order</text>
<text x="3775.5" y="992.5" font-family="Liberation Mono" font-size="17" font-weight="normal" fill="#8e6fa8" text-anchor="end" >$7.25</text>
<line x1="3282.30" y1="1010.20" x2="3776.00" y2="1010.20" stroke="#e6e6e6" stroke-width="1.3" />
<path d="M3293.6,1036.40 L3301.2,1044.00 L3308.7999999999997,1036.40" fill="none" stroke="#111" stroke-width="3.5" stroke-linejoin="miter"/>
<text x="3320.3" y="1051.0" font-family="Liberation Sans" font-size="24" font-weight="bold" fill="#384654" text-anchor="start" textLength="104.6" lengthAdjust="spacingAndGlyphs">Measures</text>
<g transform="translate(0,327.70)">
<rect x="3320.6" y="739.6" width="27.9" height="27.8" rx="4.5" fill="none" stroke="#7b0f6e" stroke-width="1.1"/>
<path d="M3328.6,759.3 L3335.2,752.7" stroke="#7b0f6e" stroke-width="3.2" stroke-linecap="round"/>
<path d="M3329.6,758.3 L3334.6,753.3" stroke="#fff" stroke-width="1.1"/>
<path d="M3334,750.4 L3338.6,755" stroke="#7b0f6e" stroke-width="2.4" stroke-linecap="round"/>
<circle cx="3338.4" cy="749.9" r="2.6" fill="#7b0f6e"/>
<g fill="none" stroke="#7b0f6e" stroke-linecap="round">
<path d="M3371,747.4 Q3362,746.5 3357.3,754.3 Q3359.5,758 3364,760.3" stroke-width="1.7"/>
<path d="M3372.3,746.5 L3364.2,761.5" stroke-width="2.5"/>
<path d="M3369.5,748.8 Q3364,750 3365.6,757.6" stroke-width="2.4"/>
<path d="M3373.4,750.3 Q3376.5,752 3377.3,754.3 Q3374,759.5 3367.6,760.7" stroke-width="1.7"/>
<path d="M3369.5,757.3 Q3371.6,755.5 3371.2,752.5" stroke-width="1.2"/>
</g>
</g>
<text x="3386.0" y="1087.7" font-family="Liberation Sans" font-size="19" font-weight="normal" fill="#7b0f6e" text-anchor="start" textLength="137.2" lengthAdjust="spacingAndGlyphs">PPC Impressions</text>
<text x="3775.5" y="1087.5" font-family="Liberation Mono" font-size="17" font-weight="normal" fill="#7b0f6e" text-anchor="end" >221,801</text>
<g transform="translate(0,374.10)">
<rect x="3320.6" y="739.6" width="27.9" height="27.8" rx="4.5" fill="none" stroke="#2bb0d8" stroke-width="1.1"/>
<path d="M3328.6,759.3 L3335.2,752.7" stroke="#2bb0d8" stroke-width="3.2" stroke-linecap="round"/>
<path d="M3329.6,758.3 L3334.6,753.3" stroke="#fff" stroke-width="1.1"/>
<path d="M3334,750.4 L3338.6,755" stroke="#2bb0d8" stroke-width="2.4" stroke-linecap="round"/>
<circle cx="3338.4" cy="749.9" r="2.6" fill="#2bb0d8"/>
<g fill="none" stroke="#2bb0d8" stroke-linecap="round">
<path d="M3371,747.4 Q3362,746.5 3357.3,754.3 Q3359.5,758 3364,760.3" stroke-width="1.7"/>
<path d="M3372.3,746.5 L3364.2,761.5" stroke-width="2.5"/>
<path d="M3369.5,748.8 Q3364,750 3365.6,757.6" stroke-width="2.4"/>
<path d="M3373.4,750.3 Q3376.5,752 3377.3,754.3 Q3374,759.5 3367.6,760.7" stroke-width="1.7"/>
<path d="M3369.5,757.3 Q3371.6,755.5 3371.2,752.5" stroke-width="1.2"/>
</g>
</g>
<text x="3386.0" y="1134.1" font-family="Liberation Sans" font-size="19" font-weight="normal" fill="#2bb0d8" text-anchor="start" textLength="87.3" lengthAdjust="spacingAndGlyphs">PPC Clicks</text>
<text x="3775.5" y="1133.9" font-family="Liberation Mono" font-size="17" font-weight="normal" fill="#2bb0d8" text-anchor="end" >2,575</text>
<g transform="translate(0,420.50)">
<rect x="3320.6" y="739.6" width="27.9" height="27.8" rx="4.5" fill="none" stroke="#4b0e9a" stroke-width="1.1"/>
<path d="M3328.6,759.3 L3335.2,752.7" stroke="#4b0e9a" stroke-width="3.2" stroke-linecap="round"/>
<path d="M3329.6,758.3 L3334.6,753.3" stroke="#fff" stroke-width="1.1"/>
<path d="M3334,750.4 L3338.6,755" stroke="#4b0e9a" stroke-width="2.4" stroke-linecap="round"/>
<circle cx="3338.4" cy="749.9" r="2.6" fill="#4b0e9a"/>
<g fill="none" stroke="#4b0e9a" stroke-linecap="round">
<path d="M3371,747.4 Q3362,746.5 3357.3,754.3 Q3359.5,758 3364,760.3" stroke-width="1.7"/>
<path d="M3372.3,746.5 L3364.2,761.5" stroke-width="2.5"/>
<path d="M3369.5,748.8 Q3364,750 3365.6,757.6" stroke-width="2.4"/>
<path d="M3373.4,750.3 Q3376.5,752 3377.3,754.3 Q3374,759.5 3367.6,760.7" stroke-width="1.7"/>
<path d="M3369.5,757.3 Q3371.6,755.5 3371.2,752.5" stroke-width="1.2"/>
</g>
</g>
<text x="3386.0" y="1180.5" font-family="Liberation Sans" font-size="19" font-weight="normal" fill="#4b0e9a" text-anchor="start" textLength="32.6" lengthAdjust="spacingAndGlyphs">CTR</text>
<text x="3775.5" y="1180.3" font-family="Liberation Mono" font-size="17" font-weight="normal" fill="#4b0e9a" text-anchor="end" >1.16%</text>
<line x1="3282.30" y1="1197.90" x2="3776.00" y2="1197.90" stroke="#e6e6e6" stroke-width="1.3" />
<path d="M3293.6,1223.70 L3301.2,1231.30 L3308.7999999999997,1223.70" fill="none" stroke="#111" stroke-width="3.5" stroke-linejoin="miter"/>
<text x="3320.3" y="1238.3" font-family="Liberation Sans" font-size="24" font-weight="bold" fill="#384654" text-anchor="start" textLength="147" lengthAdjust="spacingAndGlyphs">Performance</text>
<g transform="translate(0,516.10)">
<rect x="3320.6" y="739.6" width="27.9" height="27.8" rx="4.5" fill="none" stroke="#2e8b3e" stroke-width="1.1"/>
<path d="M3328.6,759.3 L3335.2,752.7" stroke="#2e8b3e" stroke-width="3.2" stroke-linecap="round"/>
<path d="M3329.6,758.3 L3334.6,753.3" stroke="#fff" stroke-width="1.1"/>
<path d="M3334,750.4 L3338.6,755" stroke="#2e8b3e" stroke-width="2.4" stroke-linecap="round"/>
<circle cx="3338.4" cy="749.9" r="2.6" fill="#2e8b3e"/>
<g fill="none" stroke="#2e8b3e" stroke-linecap="round">
<path d="M3371,747.4 Q3362,746.5 3357.3,754.3 Q3359.5,758 3364,760.3" stroke-width="1.7"/>
<path d="M3372.3,746.5 L3364.2,761.5" stroke-width="2.5"/>
<path d="M3369.5,748.8 Q3364,750 3365.6,757.6" stroke-width="2.4"/>
<path d="M3373.4,750.3 Q3376.5,752 3377.3,754.3 Q3374,759.5 3367.6,760.7" stroke-width="1.7"/>
<path d="M3369.5,757.3 Q3371.6,755.5 3371.2,752.5" stroke-width="1.2"/>
</g>
</g>
<text x="3386.0" y="1276.1" font-family="Liberation Sans" font-size="19" font-weight="normal" fill="#2e8b3e" text-anchor="start" textLength="45.9" lengthAdjust="spacingAndGlyphs">ACOP</text>
<text x="3775.5" y="1275.9" font-family="Liberation Mono" font-size="17" font-weight="normal" fill="#2e8b3e" text-anchor="end" >0.00%</text>
<g transform="translate(0,561.50)">
<rect x="3320.6" y="739.6" width="27.9" height="27.8" rx="4.5" fill="none" stroke="#a3085e" stroke-width="1.1"/>
<path d="M3328.6,759.3 L3335.2,752.7" stroke="#a3085e" stroke-width="3.2" stroke-linecap="round"/>
<path d="M3329.6,758.3 L3334.6,753.3" stroke="#fff" stroke-width="1.1"/>
<path d="M3334,750.4 L3338.6,755" stroke="#a3085e" stroke-width="2.4" stroke-linecap="round"/>
<circle cx="3338.4" cy="749.9" r="2.6" fill="#a3085e"/>
<g fill="none" stroke="#a3085e" stroke-linecap="round">
<path d="M3371,747.4 Q3362,746.5 3357.3,754.3 Q3359.5,758 3364,760.3" stroke-width="1.7"/>
<path d="M3372.3,746.5 L3364.2,761.5" stroke-width="2.5"/>
<path d="M3369.5,748.8 Q3364,750 3365.6,757.6" stroke-width="2.4"/>
<path d="M3373.4,750.3 Q3376.5,752 3377.3,754.3 Q3374,759.5 3367.6,760.7" stroke-width="1.7"/>
<path d="M3369.5,757.3 Q3371.6,755.5 3371.2,752.5" stroke-width="1.2"/>
</g>
</g>
<text x="3386.0" y="1321.5" font-family="Liberation Sans" font-size="19" font-weight="normal" fill="#a3085e" text-anchor="start" textLength="45" lengthAdjust="spacingAndGlyphs">ACOS</text>
<text x="3775.5" y="1321.3" font-family="Liberation Mono" font-size="17" font-weight="normal" fill="#a3085e" text-anchor="end" >12.83%</text>
<g transform="translate(0,607.90)">
<rect x="3320.6" y="739.6" width="27.9" height="27.8" rx="4.5" fill="none" stroke="#1e9fea" stroke-width="1.1"/>
<path d="M3328.6,759.3 L3335.2,752.7" stroke="#1e9fea" stroke-width="3.2" stroke-linecap="round"/>
<path d="M3329.6,758.3 L3334.6,753.3" stroke="#fff" stroke-width="1.1"/>
<path d="M3334,750.4 L3338.6,755" stroke="#1e9fea" stroke-width="2.4" stroke-linecap="round"/>
<circle cx="3338.4" cy="749.9" r="2.6" fill="#1e9fea"/>
<g fill="none" stroke="#1e9fea" stroke-linecap="round">
<path d="M3371,747.4 Q3362,746.5 3357.3,754.3 Q3359.5,758 3364,760.3" stroke-width="1.7"/>
<path d="M3372.3,746.5 L3364.2,761.5" stroke-width="2.5"/>
<path d="M3369.5,748.8 Q3364,750 3365.6,757.6" stroke-width="2.4"/>
<path d="M3373.4,750.3 Q3376.5,752 3377.3,754.3 Q3374,759.5 3367.6,760.7" stroke-width="1.7"/>
<path d="M3369.5,757.3 Q3371.6,755.5 3371.2,752.5" stroke-width="1.2"/>
</g>
</g>
<text x="3386.0" y="1367.9" font-family="Liberation Sans" font-size="19" font-weight="normal" fill="#1e9fea" text-anchor="start" textLength="198.1" lengthAdjust="spacingAndGlyphs">PPC/Non Promo Rev. %</text>
<text x="3775.5" y="1367.7" font-family="Liberation Mono" font-size="17" font-weight="normal" fill="#1e9fea" text-anchor="end" >30.40%</text></svg>
</body></html>
